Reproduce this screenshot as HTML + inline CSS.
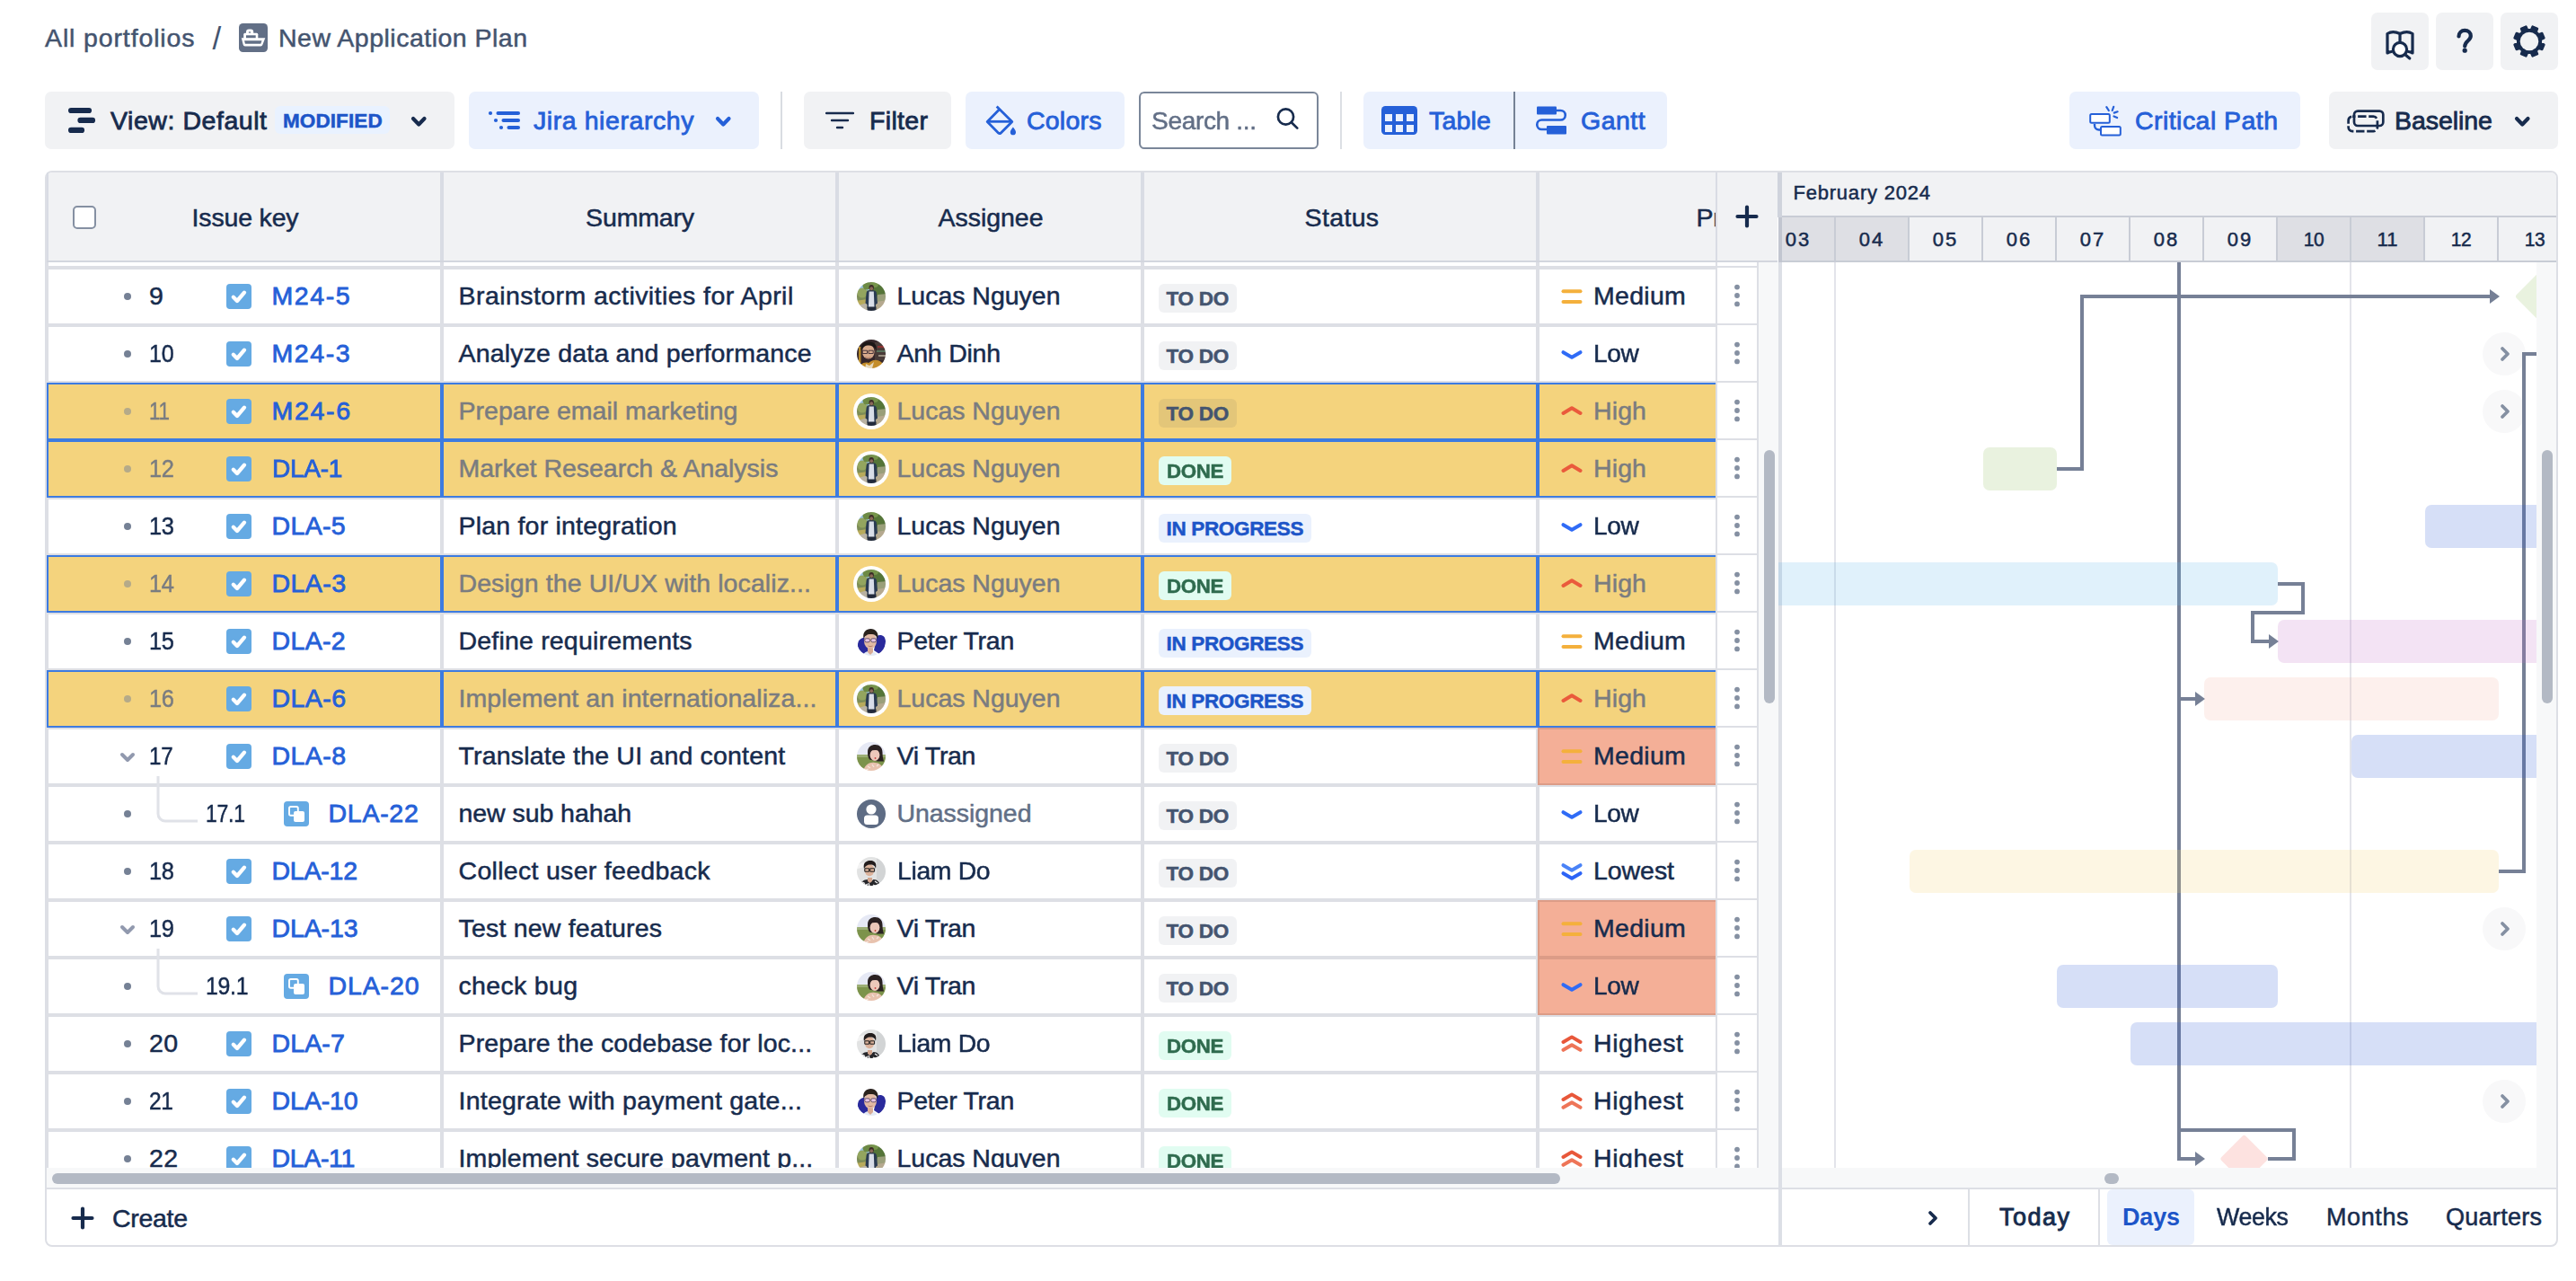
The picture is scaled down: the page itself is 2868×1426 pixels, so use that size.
<!DOCTYPE html>
<html lang="en"><head><meta charset="utf-8"><title>New Application Plan</title><style>
html,body{margin:0;padding:0;background:#fff;}
body{width:2868px;height:1426px;position:relative;overflow:hidden;font-family:"Liberation Sans", sans-serif;}
.b{position:absolute;display:block;}
.t{position:absolute;white-space:nowrap;}
</style></head><body>
<div class="t" style="left:50px;top:23.5px;height:37px;line-height:37px;font-size:28.5px;color:#44546f;-webkit-text-stroke:0.5px #44546f;letter-spacing:0.87px;">All portfolios</div>
<div class="t" style="left:236.5px;top:19.9px;height:45px;line-height:45px;font-size:35px;color:#44546f;letter-spacing:0.00px;">/</div>
<svg class="b" style="left:266px;top:26px;" width="32" height="32" viewBox="0 0 32 32"><rect width="32" height="32" rx="4.500" fill="#626f86"/><path d="M2.800 16.200H29.300L26.300 24a2.200 2.200 0 0 1-2 1.500H6.800a2.200 2.200 0 0 1-2.100-1.700z" fill="#fff"/><path d="M6.100 19.200H25.500L24.300 22.700H6.900z" fill="#626f86"/><path d="M5.200 17v-4.700a1.500 1.500 0 0 1 1.500-1.500H19.800a1.500 1.500 0 0 1 1.500 1.500V17z" fill="#fff"/><rect x="8" y="13.300" width="10.700" height="2.900" fill="#626f86"/><path d="M8 11.500V9.600a3 3 0 0 1 3-3h2.200a3 3 0 0 1 3 3v1.900z" fill="#fff"/><ellipse cx="12" cy="10" rx="1.300" ry=".800" fill="#626f86"/></svg>
<div class="t" style="left:310px;top:23.5px;height:37px;line-height:37px;font-size:28.5px;color:#44546f;-webkit-text-stroke:0.5px #44546f;letter-spacing:0.49px;">New Application Plan</div>
<div class="b" style="left:2640px;top:14px;width:64px;height:64px;background:#f1f2f4;border-radius:7px;"></div>
<div class="b" style="left:2712px;top:14px;width:64px;height:64px;background:#f1f2f4;border-radius:7px;"></div>
<div class="b" style="left:2784px;top:14px;width:64px;height:64px;background:#f1f2f4;border-radius:7px;"></div>
<svg class="b" style="left:2652px;top:30px;" width="40" height="40" viewBox="0 0 40 40"><path d="M6 7.5c4-2.4 8.5-2.4 14 0v12 M20 7.5c5.5-2.4 10-2.4 14 0V29c-1.6-.9-3-1.3-4.6-1.5 M6 7.5V29c1.600-.9 3-1.3 4.600-1.500" fill="none" stroke="#172b4d" stroke-width="3.2" stroke-linejoin="round" stroke-linecap="round"/><circle cx="20" cy="25" r="7.6" fill="#fff" stroke="#172b4d" stroke-width="3.2"/><path d="M25.800 30.800l5 4.200" stroke="#172b4d" stroke-width="3.200" stroke-linecap="round"/></svg>
<svg class="b" style="left:2728px;top:26px;" width="32" height="40" viewBox="0 0 32 40"><path d="M9.500 14.500c0-4 3-6.700 6.700-6.700s6.600 2.700 6.600 6.200c0 5.400-6.600 5.600-6.600 11.500" fill="none" stroke="#172b4d" stroke-width="4.200" stroke-linecap="round"/><circle cx="16.200" cy="30.200" r="2.600" fill="#172b4d"/></svg>
<svg class="b" style="left:2795.5px;top:25.5px;" width="40" height="40" viewBox="0 0 40 40"><path d="M23.7 3.6 L29.0 5.8 L27.6 9.5 L30.5 12.4 L34.2 11.0 L36.4 16.3 L32.8 18.0 L32.8 22.0 L36.4 23.7 L34.2 29.0 L30.5 27.6 L27.6 30.5 L29.0 34.2 L23.7 36.4 L22.0 32.8 L18.0 32.8 L16.3 36.4 L11.0 34.2 L12.4 30.5 L9.5 27.6 L5.8 29.0 L3.6 23.7 L7.2 22.0 L7.2 18.0 L3.6 16.3 L5.8 11.0 L9.5 12.4 L12.4 9.5 L11.0 5.8 L16.3 3.6 L18.0 7.2 L22.0 7.2Z" fill="#172b4d" stroke="#172b4d" stroke-width="2.500" stroke-linejoin="round"/><circle cx="20" cy="20" r="10.3" fill="#f1f2f4"/></svg>
<div class="b" style="left:50px;top:102px;width:456px;height:64px;background:#f1f2f4;border-radius:7px;"></div>
<svg class="b" style="left:76px;top:118px;" width="32" height="32" viewBox="0 0 32 32"><g stroke="#172b4d" stroke-width="6.200" stroke-linecap="round"><path d="M3.100 5H23"/><path d="M13.500 15.900H27"/><path d="M3.100 26.900H15"/></g></svg>
<div class="t" style="left:123px;top:115.5px;height:37px;line-height:37px;font-size:28.5px;color:#172b4d;-webkit-text-stroke:0.8px #172b4d;letter-spacing:0.55px;">View: Default</div>
<div class="b" style="left:306px;top:118px;width:128px;height:31px;background:#e9f2ff;border-radius:6px;"></div>
<div class="t" style="left:315px;top:119.5px;height:29px;line-height:29px;font-size:22.5px;color:#1d55c8;font-weight:700;-webkit-text-stroke:0.5px #1d55c8;letter-spacing:0.09px;">MODIFIED</div>
<svg class="b" style="left:455.75px;top:127.75px;" width="20.5" height="14.5" viewBox="0 0 20.5 14.5"><path d="M4 4l6.25 6.5l6.25 -6.5" fill="none" stroke="#172b4d" stroke-width="4.2" stroke-linecap="round" stroke-linejoin="round"/></svg>
<div class="b" style="left:522px;top:102px;width:323px;height:64px;background:#ebf1fd;border-radius:7px;"></div>
<svg class="b" style="left:543px;top:118px;" width="40" height="32" viewBox="0 0 40 32"><g stroke="#2560d8" stroke-width="4.100" stroke-linecap="round"><path d="M11.500 8H34"/><path d="M17.500 16H34"/><path d="M23.500 24H34"/></g><g fill="#2560d8"><circle cx="3" cy="8" r="2.100"/><circle cx="9" cy="16" r="2.100"/><circle cx="15" cy="24" r="2.100"/></g></svg>
<div class="t" style="left:594px;top:115.5px;height:37px;line-height:37px;font-size:28.5px;color:#2560d8;-webkit-text-stroke:0.8px #2560d8;letter-spacing:0.57px;">Jira hierarchy</div>
<svg class="b" style="left:794.75px;top:127.75px;" width="20.5" height="14.5" viewBox="0 0 20.5 14.5"><path d="M4 4l6.25 6.5l6.25 -6.5" fill="none" stroke="#2560d8" stroke-width="4.2" stroke-linecap="round" stroke-linejoin="round"/></svg>
<div class="b" style="left:869px;top:102px;width:2px;height:64px;background:#d9dce2;"></div>
<div class="b" style="left:895px;top:102px;width:164px;height:64px;background:#f1f2f4;border-radius:7px;"></div>
<svg class="b" style="left:919px;top:118px;" width="32" height="32" viewBox="0 0 32 32"><g stroke="#172b4d" stroke-width="2.400" stroke-linecap="round"><path d="M1 8H31"/><path d="M7 16H25"/><path d="M13 24H19"/></g></svg>
<div class="t" style="left:968px;top:115.5px;height:37px;line-height:37px;font-size:28.5px;color:#172b4d;-webkit-text-stroke:0.8px #172b4d;letter-spacing:0.33px;">Filter</div>
<div class="b" style="left:1075px;top:102px;width:177px;height:64px;background:#ebf1fd;border-radius:7px;"></div>
<svg class="b" style="left:1097px;top:116px;" width="38" height="38" viewBox="0 0 38 38"><path d="M12.700 2.400L29.800 19.400 17.300 31.900a2 2 0 0 1-2.800 0L2.200 19.400 15.900 5.600" fill="none" stroke="#2560d8" stroke-width="2.800" stroke-linejoin="round" stroke-linecap="butt"/><path d="M2.500 19.300H29.500" stroke="#2560d8" stroke-width="2.800"/><path d="M30.900 25.500c2 2.800 3.100 4.300 3.100 5.700a3.100 3.100 0 0 1-6.200 0c0-1.400 1.100-2.900 3.100-5.700z" fill="#2560d8"/></svg>
<div class="t" style="left:1143px;top:115.5px;height:37px;line-height:37px;font-size:28.5px;color:#2560d8;-webkit-text-stroke:0.8px #2560d8;letter-spacing:0.21px;">Colors</div>
<div class="b" style="left:1268px;top:102px;width:200px;height:64px;background:#fff;border-radius:6px;border:2px solid #7a8699;box-sizing:border-box;"></div>
<div class="t" style="left:1282px;top:115.5px;height:37px;line-height:37px;font-size:28.5px;color:#626f86;-webkit-text-stroke:0.5px #626f86;letter-spacing:-0.35px;transform:scaleX(0.985);transform-origin:left center;">Search ...</div>
<svg class="b" style="left:1416px;top:116px;" width="36" height="36" viewBox="0 0 36 36"><circle cx="15.500" cy="14" r="8.600" fill="none" stroke="#172b4d" stroke-width="2.700"/><path d="M21.800 20.300L28.300 26.600" stroke="#172b4d" stroke-width="2.700" stroke-linecap="round"/></svg>
<div class="b" style="left:1492px;top:102px;width:2px;height:64px;background:#dcdfe4;"></div>
<div class="b" style="left:1518px;top:102px;width:338px;height:64px;background:#ebf1fd;border-radius:7px;"></div>
<div class="b" style="left:1685px;top:102px;width:2px;height:64px;background:#758195;"></div>
<svg class="b" style="left:1538px;top:118px;" width="40" height="32" viewBox="0 0 40 32"><rect width="40" height="32" rx="4.500" fill="#2560d8"/><rect x="4" y="9" width="8" height="8" fill="#ebf1fd"/><rect x="4" y="21" width="8" height="8" fill="#ebf1fd"/><rect x="16" y="9" width="8" height="8" fill="#ebf1fd"/><rect x="16" y="21" width="8" height="8" fill="#ebf1fd"/><rect x="28" y="9" width="8" height="8" fill="#ebf1fd"/><rect x="28" y="21" width="8" height="8" fill="#ebf1fd"/></svg>
<div class="t" style="left:1591px;top:115.5px;height:37px;line-height:37px;font-size:28.5px;color:#2560d8;-webkit-text-stroke:0.8px #2560d8;letter-spacing:0.21px;">Table</div>
<svg class="b" style="left:1708px;top:116px;" width="40" height="36" viewBox="0 0 40 36"><rect x="3" y="2.500" width="22" height="9" rx="1" fill="#2560d8"/><rect x="14" y="24" width="22" height="9.500" rx="1" fill="#2560d8"/><path d="M25 7h4.500a5 5 0 0 1 0 10.500H8.500a5 5 0 0 0 0 10.500H14" fill="none" stroke="#2560d8" stroke-width="2.600"/></svg>
<div class="t" style="left:1760px;top:115.5px;height:37px;line-height:37px;font-size:28.5px;color:#2560d8;-webkit-text-stroke:0.8px #2560d8;letter-spacing:0.50px;">Gantt</div>
<div class="b" style="left:2304px;top:102px;width:257px;height:64px;background:#ebf1fd;border-radius:7px;"></div>
<svg class="b" style="left:2324px;top:114px;" width="42" height="40" viewBox="0 0 42 40"><g fill="#fff" stroke="#2560d8" stroke-width="2" stroke-linejoin="round"><path d="M8 24v1.500a5 5 0 0 0 5 5h2" fill="none" stroke-width="2.400"/><rect x="3.200" y="13" width="21.600" height="9.800" rx="1.500"/><rect x="15" y="27" width="21.800" height="9.600" rx="1.500"/></g><g stroke="#2560d8" stroke-width="2.200" stroke-linecap="round"><path d="M21.300 5.200l2.500 3.800"/><path d="M29.200 4.800l-1.500 4.200"/><path d="M33.600 10.300l-3.800 1.300"/><path d="M33.100 17l-3.600-1.600"/></g></svg>
<div class="t" style="left:2377px;top:115.5px;height:37px;line-height:37px;font-size:28.5px;color:#2560d8;-webkit-text-stroke:0.8px #2560d8;letter-spacing:0.45px;">Critical Path</div>
<div class="b" style="left:2593px;top:102px;width:255px;height:64px;background:#f1f2f4;border-radius:7px;"></div>
<svg class="b" style="left:2611px;top:118px;" width="46" height="32" viewBox="0 0 46 32"><rect x="10" y="5.600" width="32.300" height="16.400" rx="4" fill="none" stroke="#172b4d" stroke-width="2.700"/><rect x="3.600" y="11.700" width="32.300" height="16.400" rx="4.500" fill="none" stroke="#172b4d" stroke-width="2.700" stroke-dasharray="9.400 2.700" stroke-dashoffset="-6"/></svg>
<div class="t" style="left:2666px;top:115.5px;height:37px;line-height:37px;font-size:28.5px;color:#172b4d;-webkit-text-stroke:0.8px #172b4d;letter-spacing:-0.05px;">Baseline</div>
<svg class="b" style="left:2797.75px;top:127.75px;" width="20.5" height="14.5" viewBox="0 0 20.5 14.5"><path d="M4 4l6.25 6.5l6.25 -6.5" fill="none" stroke="#172b4d" stroke-width="4.2" stroke-linecap="round" stroke-linejoin="round"/></svg>
<div class="b" style="left:50px;top:190px;width:2798px;height:1198px;background:#fff;border:2px solid #dddfe5;border-radius:8px;box-sizing:border-box;"></div>
<div class="b" style="left:52px;top:192px;width:1927px;height:98px;background:#f1f2f4;border-top-left-radius:6px;"></div>
<div class="b" style="left:52px;top:290px;width:1927px;height:2px;background:#d3d6de;"></div>
<div class="b" style="left:490px;top:192px;width:4px;height:98px;background:#d9dce4;"></div>
<div class="b" style="left:930px;top:192px;width:4px;height:98px;background:#d9dce4;"></div>
<div class="b" style="left:1270px;top:192px;width:4px;height:98px;background:#d9dce4;"></div>
<div class="b" style="left:1710px;top:192px;width:4px;height:98px;background:#d9dce4;"></div>
<div class="b" style="left:1910px;top:192px;width:2px;height:98px;background:#d9dce4;"></div>
<div class="b" style="left:52px;top:192px;width:2px;height:98px;background:#d9dce4;"></div>
<div class="b" style="left:81px;top:229px;width:26px;height:26px;background:#fff;border:2px solid #8590a2;border-radius:5px;box-sizing:border-box;"></div>
<div class="t" style="left:273px;top:223.5px;height:37px;line-height:37px;font-size:28.5px;color:#172b4d;-webkit-text-stroke:0.5px #172b4d;letter-spacing:-0.17px;transform:translateX(-50%);transform-origin:center center;">Issue key</div>
<div class="t" style="left:712.5px;top:223.5px;height:37px;line-height:37px;font-size:28.5px;color:#172b4d;-webkit-text-stroke:0.5px #172b4d;letter-spacing:-0.16px;transform:translateX(-50%);transform-origin:center center;">Summary</div>
<div class="t" style="left:1103px;top:223.5px;height:37px;line-height:37px;font-size:28.5px;color:#172b4d;-webkit-text-stroke:0.5px #172b4d;letter-spacing:-0.04px;transform:translateX(-50%);transform-origin:center center;">Assignee</div>
<div class="t" style="left:1494px;top:223.5px;height:37px;line-height:37px;font-size:28.5px;color:#172b4d;-webkit-text-stroke:0.5px #172b4d;letter-spacing:0.34px;transform:translateX(-50%);transform-origin:center center;">Status</div>
<div class="b" style="left:1880px;top:192px;width:30px;height:98px;overflow:hidden;"><div class="t" style="left:8.5px;top:31.5px;height:37px;line-height:37px;font-size:28.5px;color:#172b4d;-webkit-text-stroke:0.5px #172b4d;letter-spacing:-0.35px;">Priority</div></div>
<svg class="b" style="left:1931px;top:227px;" width="28" height="28" viewBox="0 0 28 28"><path d="M14 3.500V24.500M3.500 14H24.500" stroke="#172b4d" stroke-width="4.200" stroke-linecap="round"/></svg>
<div class="b" style="left:52px;top:292px;width:1858px;height:1008px;overflow:hidden;"><div class="b" style="left:0px;top:0px;width:2px;height:1008px;background:#dddfe5;"></div><div class="b" style="left:438px;top:0px;width:4px;height:1008px;background:#dddfe5;"></div><div class="b" style="left:878px;top:0px;width:4px;height:1008px;background:#dddfe5;"></div><div class="b" style="left:1218px;top:0px;width:4px;height:1008px;background:#dddfe5;"></div><div class="b" style="left:1658px;top:0px;width:4px;height:1008px;background:#dddfe5;"></div><div class="b" style="left:2px;top:4px;width:1856px;height:4px;background:#dddfe5;"></div><div class="b" style="left:2px;top:68px;width:1856px;height:4px;background:#dddfe5;"></div><div class="b" style="left:2px;top:132px;width:1856px;height:4px;background:#dddfe5;"></div><div class="b" style="left:2px;top:196px;width:1856px;height:4px;background:#dddfe5;"></div><div class="b" style="left:2px;top:260px;width:1856px;height:4px;background:#dddfe5;"></div><div class="b" style="left:2px;top:324px;width:1856px;height:4px;background:#dddfe5;"></div><div class="b" style="left:2px;top:388px;width:1856px;height:4px;background:#dddfe5;"></div><div class="b" style="left:2px;top:452px;width:1856px;height:4px;background:#dddfe5;"></div><div class="b" style="left:2px;top:516px;width:1856px;height:4px;background:#dddfe5;"></div><div class="b" style="left:2px;top:580px;width:1856px;height:4px;background:#dddfe5;"></div><div class="b" style="left:2px;top:644px;width:1856px;height:4px;background:#dddfe5;"></div><div class="b" style="left:2px;top:708px;width:1856px;height:4px;background:#dddfe5;"></div><div class="b" style="left:2px;top:772px;width:1856px;height:4px;background:#dddfe5;"></div><div class="b" style="left:2px;top:836px;width:1856px;height:4px;background:#dddfe5;"></div><div class="b" style="left:2px;top:900px;width:1856px;height:4px;background:#dddfe5;"></div><div class="b" style="left:2px;top:964px;width:1856px;height:4px;background:#dddfe5;"></div><div class="b" style="left:2px;top:1028px;width:1856px;height:4px;background:#dddfe5;"></div><div class="b" style="left:86px;top:34px;width:8px;height:8px;background:#758195;border-radius:50%;"></div><div class="t" style="left:114px;top:19.0px;height:37px;line-height:37px;font-size:28.5px;color:#172b4d;-webkit-text-stroke:0.5px #172b4d;letter-spacing:0.14px;">9</div><svg class="b" style="left:200px;top:24px;" width="28" height="28" viewBox="0 0 28 28"><rect width="28" height="28" rx="4" fill="#65aae3"/><path d="M7.800 14.800l4.200 4.200 8-9.300" fill="none" stroke="#fff" stroke-width="4.300" stroke-linecap="round" stroke-linejoin="round"/></svg><div class="t" style="left:250.5px;top:19.0px;height:37px;line-height:37px;font-size:28.5px;color:#2560d8;-webkit-text-stroke:0.8px #2560d8;letter-spacing:1.60px;">M24-5</div><div class="t" style="left:458.5px;top:19.0px;height:37px;line-height:37px;font-size:28.5px;color:#172b4d;-webkit-text-stroke:0.5px #172b4d;letter-spacing:0.44px;">Brainstorm activities for April</div><svg class="b" style="left:902px;top:22px;" width="32" height="32" viewBox="0 0 32 32"><defs><clipPath id="c1"><circle cx="16" cy="16" r="16"/></clipPath><filter id="fc1" x="-10%" y="-10%" width="120%" height="120%"><feGaussianBlur stdDeviation="0.55"/></filter></defs><g clip-path="url(#c1)"><g filter="url(#fc1)"><rect x="-2" y="-2" width="36" height="36" fill="#7c8c56"/><path d="M-2 -2H14V9L-2 12z" fill="#9cc4e6"/><circle cx="6" cy="12" r="5.500" fill="#93a55e"/><circle cx="11" cy="4" r="4.500" fill="#6d8a44"/><circle cx="25" cy="8" r="8" fill="#557538"/><circle cx="20" cy="2" r="4" fill="#76944c"/><circle cx="30" cy="15" r="4" fill="#55733a"/><path d="M-2 21L12 19V34H-2z" fill="#b8ab5c"/><path d="M-2 27L12 23V34H-2z" fill="#b9b2a2"/><path d="M20 20L34 17V34H20z" fill="#b5a98f"/><path d="M23 14L34 13V20L22 22z" fill="#9a9f7a"/><path d="M10.500 12.500c0-2.500 2-3.500 5.700-3.500s5.800 1 5.800 3.500l1 11-2 1.500V29H11.500V25l-2-1.500z" fill="#2b3b52"/><path d="M13.600 10.500h5.200l.700 17.500h-6.600z" fill="#d8dde8"/><rect x="11.500" y="27.500" width="10" height="6" fill="#232c3a"/><ellipse cx="16.200" cy="6.200" rx="2.700" ry="3.100" fill="#3b2c27"/><ellipse cx="16.200" cy="7.200" rx="1.900" ry="2" fill="#8a6a58"/></g></g></svg><div class="t" style="left:946.5px;top:19.0px;height:37px;line-height:37px;font-size:28.5px;color:#172b4d;-webkit-text-stroke:0.5px #172b4d;letter-spacing:-0.02px;">Lucas Nguyen</div><div class="b" style="left:1238px;top:24px;width:87px;height:32px;background:#f1f2f4;border-radius:6px;"></div><div class="t" style="left:1246.5px;top:26.0px;height:29px;line-height:29px;font-size:22.5px;color:#44546f;font-weight:700;-webkit-text-stroke:0.5px #44546f;letter-spacing:-0.29px;">TO DO</div><svg class="b" style="left:1686px;top:26px;" width="24" height="24" viewBox="0 0 24 24"><g stroke="#f4b03c" stroke-width="4" stroke-linecap="round"><path d="M2.500 6.200H21.500"/><path d="M2.500 17.900H21.500"/></g></svg><div class="t" style="left:1722px;top:19.0px;height:37px;line-height:37px;font-size:28.5px;color:#172b4d;-webkit-text-stroke:0.5px #172b4d;letter-spacing:0.28px;">Medium</div><div class="b" style="left:86px;top:98px;width:8px;height:8px;background:#758195;border-radius:50%;"></div><div class="t" style="left:114px;top:83.0px;height:37px;line-height:37px;font-size:28.5px;color:#172b4d;-webkit-text-stroke:0.5px #172b4d;letter-spacing:-0.35px;transform:scaleX(0.880);transform-origin:left center;">10</div><svg class="b" style="left:200px;top:88px;" width="28" height="28" viewBox="0 0 28 28"><rect width="28" height="28" rx="4" fill="#65aae3"/><path d="M7.800 14.800l4.200 4.200 8-9.300" fill="none" stroke="#fff" stroke-width="4.300" stroke-linecap="round" stroke-linejoin="round"/></svg><div class="t" style="left:250.5px;top:83.0px;height:37px;line-height:37px;font-size:28.5px;color:#2560d8;-webkit-text-stroke:0.8px #2560d8;letter-spacing:1.60px;">M24-3</div><div class="t" style="left:458.5px;top:83.0px;height:37px;line-height:37px;font-size:28.5px;color:#172b4d;-webkit-text-stroke:0.5px #172b4d;letter-spacing:0.18px;">Analyze data and performance</div><svg class="b" style="left:902px;top:86px;" width="32" height="32" viewBox="0 0 32 32"><defs><clipPath id="c2"><circle cx="16" cy="16" r="16"/></clipPath><filter id="fc2" x="-10%" y="-10%" width="120%" height="120%"><feGaussianBlur stdDeviation="0.55"/></filter></defs><g clip-path="url(#c2)"><g filter="url(#fc2)"><rect x="-2" y="-2" width="36" height="36" fill="#35272a"/><rect x="20" y="3" width="14" height="20" fill="#4a3b38"/><rect x="23" y="7" width="9" height="2.200" fill="#8d3030"/><rect x="22" y="12" width="10" height="2" fill="#58705a"/><rect x="24" y="17" width="8" height="2" fill="#9a8f80"/><rect x="2" y="8" width="2.500" height="18" fill="#b5882a"/><ellipse cx="12.800" cy="13.500" rx="6.800" ry="8" fill="#d7a98c"/><path d="M4.500 12c-.500-7 4-10 9.500-9.500 5.500 0 9 3.500 7.500 10.500-1-4-3-6-8-6.500-4.500 0-7 2-9 5.500z" fill="#1f1718"/><path d="M2 34c1-7 6-9.500 11-8l3-2c6-3 12 0 15 6v4z" fill="#c48d2c"/><path d="M10 27l4 2 5-4-2.500 9H9z" fill="#e6d9bd"/><path d="M6.300 12.200h5.200v3.300H6.300zM13 12.200h5.200v3.300H13z" fill="none" stroke="#3b2b33" stroke-width=".900"/><path d="M9.500 19.500c2 1.200 4 1.200 6 0" fill="none" stroke="#a8705c" stroke-width=".900"/></g></g></svg><div class="t" style="left:946.5px;top:83.0px;height:37px;line-height:37px;font-size:28.5px;color:#172b4d;-webkit-text-stroke:0.5px #172b4d;letter-spacing:-0.25px;">Anh Dinh</div><div class="b" style="left:1238px;top:88px;width:87px;height:32px;background:#f1f2f4;border-radius:6px;"></div><div class="t" style="left:1246.5px;top:90.0px;height:29px;line-height:29px;font-size:22.5px;color:#44546f;font-weight:700;-webkit-text-stroke:0.5px #44546f;letter-spacing:-0.29px;">TO DO</div><svg class="b" style="left:1686px;top:90px;" width="24" height="24" viewBox="0 0 24 24"><path d="M2.5 10.2 L12 15.8 L21.5 10.2" fill="none" stroke="#2f6bf6" stroke-width="4" stroke-linecap="round" stroke-linejoin="round"/></svg><div class="t" style="left:1722px;top:83.0px;height:37px;line-height:37px;font-size:28.5px;color:#172b4d;-webkit-text-stroke:0.5px #172b4d;letter-spacing:-0.35px;transform:scaleX(0.985);transform-origin:left center;">Low</div><div class="b" style="left:0px;top:134px;width:440px;height:64px;background:#f4d37d;border:2px solid #3d7be0;box-sizing:border-box;"></div><div class="b" style="left:440px;top:134px;width:440px;height:64px;background:#f4d37d;border:2px solid #3d7be0;box-sizing:border-box;"></div><div class="b" style="left:880px;top:134px;width:340px;height:64px;background:#f4d37d;border:2px solid #3d7be0;box-sizing:border-box;"></div><div class="b" style="left:1220px;top:134px;width:440px;height:64px;background:#f4d37d;border:2px solid #3d7be0;box-sizing:border-box;"></div><div class="b" style="left:1660px;top:134px;width:200px;height:64px;background:#f4d37d;border:2px solid #3d7be0;box-sizing:border-box;"></div><div class="b" style="left:86px;top:162px;width:8px;height:8px;background:#758195;border-radius:50%;opacity:.5;"></div><div class="t" style="left:114px;top:147.0px;height:37px;line-height:37px;font-size:28.5px;color:#7a7c80;-webkit-text-stroke:0.5px #7a7c80;letter-spacing:-0.35px;transform:scaleX(0.786);transform-origin:left center;">11</div><svg class="b" style="left:200px;top:152px;" width="28" height="28" viewBox="0 0 28 28"><rect width="28" height="28" rx="4" fill="#65aae3"/><path d="M7.800 14.800l4.200 4.200 8-9.300" fill="none" stroke="#fff" stroke-width="4.300" stroke-linecap="round" stroke-linejoin="round"/></svg><div class="t" style="left:250.5px;top:147.0px;height:37px;line-height:37px;font-size:28.5px;color:#2560d8;-webkit-text-stroke:0.8px #2560d8;letter-spacing:1.68px;">M24-6</div><div class="t" style="left:458.5px;top:147.0px;height:37px;line-height:37px;font-size:28.5px;color:#7a7c80;-webkit-text-stroke:0.5px #7a7c80;letter-spacing:0.02px;">Prepare email marketing</div><div class="b" style="left:898px;top:146px;width:40px;height:40px;background:#fff;border-radius:50%;"></div><svg class="b" style="left:902px;top:150px;" width="32" height="32" viewBox="0 0 32 32"><defs><clipPath id="c3"><circle cx="16" cy="16" r="16"/></clipPath><filter id="fc3" x="-10%" y="-10%" width="120%" height="120%"><feGaussianBlur stdDeviation="0.55"/></filter></defs><g clip-path="url(#c3)"><g filter="url(#fc3)"><rect x="-2" y="-2" width="36" height="36" fill="#7c8c56"/><path d="M-2 -2H14V9L-2 12z" fill="#9cc4e6"/><circle cx="6" cy="12" r="5.500" fill="#93a55e"/><circle cx="11" cy="4" r="4.500" fill="#6d8a44"/><circle cx="25" cy="8" r="8" fill="#557538"/><circle cx="20" cy="2" r="4" fill="#76944c"/><circle cx="30" cy="15" r="4" fill="#55733a"/><path d="M-2 21L12 19V34H-2z" fill="#b8ab5c"/><path d="M-2 27L12 23V34H-2z" fill="#b9b2a2"/><path d="M20 20L34 17V34H20z" fill="#b5a98f"/><path d="M23 14L34 13V20L22 22z" fill="#9a9f7a"/><path d="M10.500 12.500c0-2.500 2-3.500 5.700-3.500s5.800 1 5.800 3.500l1 11-2 1.500V29H11.500V25l-2-1.500z" fill="#2b3b52"/><path d="M13.600 10.500h5.200l.700 17.500h-6.600z" fill="#d8dde8"/><rect x="11.500" y="27.500" width="10" height="6" fill="#232c3a"/><ellipse cx="16.200" cy="6.200" rx="2.700" ry="3.100" fill="#3b2c27"/><ellipse cx="16.200" cy="7.200" rx="1.900" ry="2" fill="#8a6a58"/></g></g></svg><div class="t" style="left:946.5px;top:147.0px;height:37px;line-height:37px;font-size:28.5px;color:#7a7c80;-webkit-text-stroke:0.5px #7a7c80;letter-spacing:-0.02px;">Lucas Nguyen</div><div class="b" style="left:1238px;top:152px;width:87px;height:32px;background:rgba(9,30,66,.07);border-radius:6px;"></div><div class="t" style="left:1246.5px;top:154.0px;height:29px;line-height:29px;font-size:22.5px;color:#44546f;font-weight:700;-webkit-text-stroke:0.5px #44546f;letter-spacing:-0.29px;">TO DO</div><svg class="b" style="left:1686px;top:154px;" width="24" height="24" viewBox="0 0 24 24"><path d="M2.5 14 L12 8.2 L21.5 14" fill="none" stroke="#ea5a3c" stroke-width="4" stroke-linecap="round" stroke-linejoin="round"/></svg><div class="t" style="left:1722px;top:147.0px;height:37px;line-height:37px;font-size:28.5px;color:#7a7c80;-webkit-text-stroke:0.5px #7a7c80;letter-spacing:0.12px;">High</div><div class="b" style="left:0px;top:198px;width:440px;height:64px;background:#f4d37d;border:2px solid #3d7be0;box-sizing:border-box;"></div><div class="b" style="left:440px;top:198px;width:440px;height:64px;background:#f4d37d;border:2px solid #3d7be0;box-sizing:border-box;"></div><div class="b" style="left:880px;top:198px;width:340px;height:64px;background:#f4d37d;border:2px solid #3d7be0;box-sizing:border-box;"></div><div class="b" style="left:1220px;top:198px;width:440px;height:64px;background:#f4d37d;border:2px solid #3d7be0;box-sizing:border-box;"></div><div class="b" style="left:1660px;top:198px;width:200px;height:64px;background:#f4d37d;border:2px solid #3d7be0;box-sizing:border-box;"></div><div class="b" style="left:86px;top:226px;width:8px;height:8px;background:#758195;border-radius:50%;opacity:.5;"></div><div class="t" style="left:114px;top:211.0px;height:37px;line-height:37px;font-size:28.5px;color:#7a7c80;-webkit-text-stroke:0.5px #7a7c80;letter-spacing:-0.35px;transform:scaleX(0.893);transform-origin:left center;">12</div><svg class="b" style="left:200px;top:216px;" width="28" height="28" viewBox="0 0 28 28"><rect width="28" height="28" rx="4" fill="#65aae3"/><path d="M7.800 14.800l4.200 4.200 8-9.300" fill="none" stroke="#fff" stroke-width="4.300" stroke-linecap="round" stroke-linejoin="round"/></svg><div class="t" style="left:250.5px;top:211.0px;height:37px;line-height:37px;font-size:28.5px;color:#2560d8;-webkit-text-stroke:0.8px #2560d8;letter-spacing:-0.35px;transform:scaleX(0.989);transform-origin:left center;">DLA-1</div><div class="t" style="left:458.5px;top:211.0px;height:37px;line-height:37px;font-size:28.5px;color:#7a7c80;-webkit-text-stroke:0.5px #7a7c80;letter-spacing:-0.02px;">Market Research &amp; Analysis</div><div class="b" style="left:898px;top:210px;width:40px;height:40px;background:#fff;border-radius:50%;"></div><svg class="b" style="left:902px;top:214px;" width="32" height="32" viewBox="0 0 32 32"><defs><clipPath id="c4"><circle cx="16" cy="16" r="16"/></clipPath><filter id="fc4" x="-10%" y="-10%" width="120%" height="120%"><feGaussianBlur stdDeviation="0.55"/></filter></defs><g clip-path="url(#c4)"><g filter="url(#fc4)"><rect x="-2" y="-2" width="36" height="36" fill="#7c8c56"/><path d="M-2 -2H14V9L-2 12z" fill="#9cc4e6"/><circle cx="6" cy="12" r="5.500" fill="#93a55e"/><circle cx="11" cy="4" r="4.500" fill="#6d8a44"/><circle cx="25" cy="8" r="8" fill="#557538"/><circle cx="20" cy="2" r="4" fill="#76944c"/><circle cx="30" cy="15" r="4" fill="#55733a"/><path d="M-2 21L12 19V34H-2z" fill="#b8ab5c"/><path d="M-2 27L12 23V34H-2z" fill="#b9b2a2"/><path d="M20 20L34 17V34H20z" fill="#b5a98f"/><path d="M23 14L34 13V20L22 22z" fill="#9a9f7a"/><path d="M10.500 12.500c0-2.500 2-3.500 5.700-3.500s5.800 1 5.800 3.500l1 11-2 1.500V29H11.500V25l-2-1.500z" fill="#2b3b52"/><path d="M13.600 10.500h5.200l.700 17.500h-6.600z" fill="#d8dde8"/><rect x="11.500" y="27.500" width="10" height="6" fill="#232c3a"/><ellipse cx="16.200" cy="6.200" rx="2.700" ry="3.100" fill="#3b2c27"/><ellipse cx="16.200" cy="7.200" rx="1.900" ry="2" fill="#8a6a58"/></g></g></svg><div class="t" style="left:946.5px;top:211.0px;height:37px;line-height:37px;font-size:28.5px;color:#7a7c80;-webkit-text-stroke:0.5px #7a7c80;letter-spacing:-0.02px;">Lucas Nguyen</div><div class="b" style="left:1238px;top:216px;width:81px;height:32px;background:#e1fcf1;border-radius:6px;"></div><div class="t" style="left:1246.5px;top:218.0px;height:29px;line-height:29px;font-size:22.5px;color:#2f6b4e;font-weight:700;-webkit-text-stroke:0.5px #2f6b4e;letter-spacing:-0.35px;transform:scaleX(0.991);transform-origin:left center;">DONE</div><svg class="b" style="left:1686px;top:218px;" width="24" height="24" viewBox="0 0 24 24"><path d="M2.5 14 L12 8.2 L21.5 14" fill="none" stroke="#ea5a3c" stroke-width="4" stroke-linecap="round" stroke-linejoin="round"/></svg><div class="t" style="left:1722px;top:211.0px;height:37px;line-height:37px;font-size:28.5px;color:#7a7c80;-webkit-text-stroke:0.5px #7a7c80;letter-spacing:0.12px;">High</div><div class="b" style="left:86px;top:290px;width:8px;height:8px;background:#758195;border-radius:50%;"></div><div class="t" style="left:114px;top:275.0px;height:37px;line-height:37px;font-size:28.5px;color:#172b4d;-webkit-text-stroke:0.5px #172b4d;letter-spacing:-0.35px;transform:scaleX(0.893);transform-origin:left center;">13</div><svg class="b" style="left:200px;top:280px;" width="28" height="28" viewBox="0 0 28 28"><rect width="28" height="28" rx="4" fill="#65aae3"/><path d="M7.800 14.800l4.200 4.200 8-9.300" fill="none" stroke="#fff" stroke-width="4.300" stroke-linecap="round" stroke-linejoin="round"/></svg><div class="t" style="left:250.5px;top:275.0px;height:37px;line-height:37px;font-size:28.5px;color:#2560d8;-webkit-text-stroke:0.8px #2560d8;letter-spacing:0.35px;">DLA-5</div><div class="t" style="left:458.5px;top:275.0px;height:37px;line-height:37px;font-size:28.5px;color:#172b4d;-webkit-text-stroke:0.5px #172b4d;letter-spacing:0.20px;">Plan for integration</div><svg class="b" style="left:902px;top:278px;" width="32" height="32" viewBox="0 0 32 32"><defs><clipPath id="c5"><circle cx="16" cy="16" r="16"/></clipPath><filter id="fc5" x="-10%" y="-10%" width="120%" height="120%"><feGaussianBlur stdDeviation="0.55"/></filter></defs><g clip-path="url(#c5)"><g filter="url(#fc5)"><rect x="-2" y="-2" width="36" height="36" fill="#7c8c56"/><path d="M-2 -2H14V9L-2 12z" fill="#9cc4e6"/><circle cx="6" cy="12" r="5.500" fill="#93a55e"/><circle cx="11" cy="4" r="4.500" fill="#6d8a44"/><circle cx="25" cy="8" r="8" fill="#557538"/><circle cx="20" cy="2" r="4" fill="#76944c"/><circle cx="30" cy="15" r="4" fill="#55733a"/><path d="M-2 21L12 19V34H-2z" fill="#b8ab5c"/><path d="M-2 27L12 23V34H-2z" fill="#b9b2a2"/><path d="M20 20L34 17V34H20z" fill="#b5a98f"/><path d="M23 14L34 13V20L22 22z" fill="#9a9f7a"/><path d="M10.500 12.500c0-2.500 2-3.500 5.700-3.500s5.800 1 5.800 3.500l1 11-2 1.500V29H11.500V25l-2-1.500z" fill="#2b3b52"/><path d="M13.600 10.500h5.200l.700 17.500h-6.600z" fill="#d8dde8"/><rect x="11.500" y="27.500" width="10" height="6" fill="#232c3a"/><ellipse cx="16.200" cy="6.200" rx="2.700" ry="3.100" fill="#3b2c27"/><ellipse cx="16.200" cy="7.200" rx="1.900" ry="2" fill="#8a6a58"/></g></g></svg><div class="t" style="left:946.5px;top:275.0px;height:37px;line-height:37px;font-size:28.5px;color:#172b4d;-webkit-text-stroke:0.5px #172b4d;letter-spacing:-0.02px;">Lucas Nguyen</div><div class="b" style="left:1238px;top:280px;width:170px;height:32px;background:#eaf1fd;border-radius:6px;"></div><div class="t" style="left:1246.5px;top:282.0px;height:29px;line-height:29px;font-size:22.5px;color:#1d55c8;font-weight:700;-webkit-text-stroke:0.5px #1d55c8;letter-spacing:-0.33px;">IN PROGRESS</div><svg class="b" style="left:1686px;top:282px;" width="24" height="24" viewBox="0 0 24 24"><path d="M2.5 10.2 L12 15.8 L21.5 10.2" fill="none" stroke="#2f6bf6" stroke-width="4" stroke-linecap="round" stroke-linejoin="round"/></svg><div class="t" style="left:1722px;top:275.0px;height:37px;line-height:37px;font-size:28.5px;color:#172b4d;-webkit-text-stroke:0.5px #172b4d;letter-spacing:-0.35px;transform:scaleX(0.985);transform-origin:left center;">Low</div><div class="b" style="left:0px;top:326px;width:440px;height:64px;background:#f4d37d;border:2px solid #3d7be0;box-sizing:border-box;"></div><div class="b" style="left:440px;top:326px;width:440px;height:64px;background:#f4d37d;border:2px solid #3d7be0;box-sizing:border-box;"></div><div class="b" style="left:880px;top:326px;width:340px;height:64px;background:#f4d37d;border:2px solid #3d7be0;box-sizing:border-box;"></div><div class="b" style="left:1220px;top:326px;width:440px;height:64px;background:#f4d37d;border:2px solid #3d7be0;box-sizing:border-box;"></div><div class="b" style="left:1660px;top:326px;width:200px;height:64px;background:#f4d37d;border:2px solid #3d7be0;box-sizing:border-box;"></div><div class="b" style="left:86px;top:354px;width:8px;height:8px;background:#758195;border-radius:50%;opacity:.5;"></div><div class="t" style="left:114px;top:339.0px;height:37px;line-height:37px;font-size:28.5px;color:#7a7c80;-webkit-text-stroke:0.5px #7a7c80;letter-spacing:-0.35px;transform:scaleX(0.893);transform-origin:left center;">14</div><svg class="b" style="left:200px;top:344px;" width="28" height="28" viewBox="0 0 28 28"><rect width="28" height="28" rx="4" fill="#65aae3"/><path d="M7.800 14.800l4.200 4.200 8-9.300" fill="none" stroke="#fff" stroke-width="4.300" stroke-linecap="round" stroke-linejoin="round"/></svg><div class="t" style="left:250.5px;top:339.0px;height:37px;line-height:37px;font-size:28.5px;color:#2560d8;-webkit-text-stroke:0.8px #2560d8;letter-spacing:0.43px;">DLA-3</div><div class="t" style="left:458.5px;top:339.0px;height:37px;line-height:37px;font-size:28.5px;color:#7a7c80;-webkit-text-stroke:0.5px #7a7c80;letter-spacing:0.09px;">Design the UI/UX with localiz...</div><div class="b" style="left:898px;top:338px;width:40px;height:40px;background:#fff;border-radius:50%;"></div><svg class="b" style="left:902px;top:342px;" width="32" height="32" viewBox="0 0 32 32"><defs><clipPath id="c6"><circle cx="16" cy="16" r="16"/></clipPath><filter id="fc6" x="-10%" y="-10%" width="120%" height="120%"><feGaussianBlur stdDeviation="0.55"/></filter></defs><g clip-path="url(#c6)"><g filter="url(#fc6)"><rect x="-2" y="-2" width="36" height="36" fill="#7c8c56"/><path d="M-2 -2H14V9L-2 12z" fill="#9cc4e6"/><circle cx="6" cy="12" r="5.500" fill="#93a55e"/><circle cx="11" cy="4" r="4.500" fill="#6d8a44"/><circle cx="25" cy="8" r="8" fill="#557538"/><circle cx="20" cy="2" r="4" fill="#76944c"/><circle cx="30" cy="15" r="4" fill="#55733a"/><path d="M-2 21L12 19V34H-2z" fill="#b8ab5c"/><path d="M-2 27L12 23V34H-2z" fill="#b9b2a2"/><path d="M20 20L34 17V34H20z" fill="#b5a98f"/><path d="M23 14L34 13V20L22 22z" fill="#9a9f7a"/><path d="M10.500 12.500c0-2.500 2-3.500 5.700-3.500s5.800 1 5.800 3.500l1 11-2 1.500V29H11.500V25l-2-1.500z" fill="#2b3b52"/><path d="M13.600 10.500h5.200l.700 17.500h-6.600z" fill="#d8dde8"/><rect x="11.500" y="27.500" width="10" height="6" fill="#232c3a"/><ellipse cx="16.200" cy="6.200" rx="2.700" ry="3.100" fill="#3b2c27"/><ellipse cx="16.200" cy="7.200" rx="1.900" ry="2" fill="#8a6a58"/></g></g></svg><div class="t" style="left:946.5px;top:339.0px;height:37px;line-height:37px;font-size:28.5px;color:#7a7c80;-webkit-text-stroke:0.5px #7a7c80;letter-spacing:-0.02px;">Lucas Nguyen</div><div class="b" style="left:1238px;top:344px;width:81px;height:32px;background:#e1fcf1;border-radius:6px;"></div><div class="t" style="left:1246.5px;top:346.0px;height:29px;line-height:29px;font-size:22.5px;color:#2f6b4e;font-weight:700;-webkit-text-stroke:0.5px #2f6b4e;letter-spacing:-0.35px;transform:scaleX(0.991);transform-origin:left center;">DONE</div><svg class="b" style="left:1686px;top:346px;" width="24" height="24" viewBox="0 0 24 24"><path d="M2.5 14 L12 8.2 L21.5 14" fill="none" stroke="#ea5a3c" stroke-width="4" stroke-linecap="round" stroke-linejoin="round"/></svg><div class="t" style="left:1722px;top:339.0px;height:37px;line-height:37px;font-size:28.5px;color:#7a7c80;-webkit-text-stroke:0.5px #7a7c80;letter-spacing:0.12px;">High</div><div class="b" style="left:86px;top:418px;width:8px;height:8px;background:#758195;border-radius:50%;"></div><div class="t" style="left:114px;top:403.0px;height:37px;line-height:37px;font-size:28.5px;color:#172b4d;-webkit-text-stroke:0.5px #172b4d;letter-spacing:-0.35px;transform:scaleX(0.893);transform-origin:left center;">15</div><svg class="b" style="left:200px;top:408px;" width="28" height="28" viewBox="0 0 28 28"><rect width="28" height="28" rx="4" fill="#65aae3"/><path d="M7.800 14.800l4.200 4.200 8-9.300" fill="none" stroke="#fff" stroke-width="4.300" stroke-linecap="round" stroke-linejoin="round"/></svg><div class="t" style="left:250.5px;top:403.0px;height:37px;line-height:37px;font-size:28.5px;color:#2560d8;-webkit-text-stroke:0.8px #2560d8;letter-spacing:0.35px;">DLA-2</div><div class="t" style="left:458.5px;top:403.0px;height:37px;line-height:37px;font-size:28.5px;color:#172b4d;-webkit-text-stroke:0.5px #172b4d;letter-spacing:0.19px;">Define requirements</div><svg class="b" style="left:902px;top:406px;" width="32" height="32" viewBox="0 0 32 32"><defs><clipPath id="c7"><circle cx="16" cy="16" r="16"/></clipPath><filter id="fc7" x="-10%" y="-10%" width="120%" height="120%"><feGaussianBlur stdDeviation="0.55"/></filter></defs><g clip-path="url(#c7)"><g filter="url(#fc7)"><rect x="-2" y="-2" width="36" height="36" fill="#fff"/><path d="M1 20c0-5 4-9 9-8l3 16-7 3c-3-2-5-6-5-11z" fill="#2a2c9c"/><path d="M22 10c5-2.500 10 0 10 6 0 7-3 12-7 14l-6-4z" fill="#2a2c9c"/><ellipse cx="15" cy="15.500" rx="7" ry="8.800" fill="#e2b9a4"/><path d="M7.500 13c-1.500-7.500 3-11 8-11s9.500 4 7.500 11.500c-.800-3.500-3-5.500-7.500-5.500s-6.500 2-8 5z" fill="#29221f"/><path d="M6 34c1-5 4-7.500 9-7 4-.500 7.500 1.500 9 7z" fill="#e4eaf5"/><path d="M12 23.500h6v4.500l-3 3-3-3z" fill="#d9ab95"/><rect x="8.800" y="12.800" width="5.600" height="4" rx="1.600" fill="#e6c4e4" stroke="#4a3a55" stroke-width=".800"/><rect x="15.800" y="12.800" width="5.600" height="4" rx="1.600" fill="#e6c4e4" stroke="#4a3a55" stroke-width=".800"/><path d="M12.500 21c1.700.800 3.400.800 5 0" fill="none" stroke="#b57868" stroke-width="1"/></g></g></svg><div class="t" style="left:946.5px;top:403.0px;height:37px;line-height:37px;font-size:28.5px;color:#172b4d;-webkit-text-stroke:0.5px #172b4d;letter-spacing:-0.25px;">Peter Tran</div><div class="b" style="left:1238px;top:408px;width:170px;height:32px;background:#eaf1fd;border-radius:6px;"></div><div class="t" style="left:1246.5px;top:410.0px;height:29px;line-height:29px;font-size:22.5px;color:#1d55c8;font-weight:700;-webkit-text-stroke:0.5px #1d55c8;letter-spacing:-0.33px;">IN PROGRESS</div><svg class="b" style="left:1686px;top:410px;" width="24" height="24" viewBox="0 0 24 24"><g stroke="#f4b03c" stroke-width="4" stroke-linecap="round"><path d="M2.500 6.200H21.500"/><path d="M2.500 17.900H21.500"/></g></svg><div class="t" style="left:1722px;top:403.0px;height:37px;line-height:37px;font-size:28.5px;color:#172b4d;-webkit-text-stroke:0.5px #172b4d;letter-spacing:0.28px;">Medium</div><div class="b" style="left:0px;top:454px;width:440px;height:64px;background:#f4d37d;border:2px solid #3d7be0;box-sizing:border-box;"></div><div class="b" style="left:440px;top:454px;width:440px;height:64px;background:#f4d37d;border:2px solid #3d7be0;box-sizing:border-box;"></div><div class="b" style="left:880px;top:454px;width:340px;height:64px;background:#f4d37d;border:2px solid #3d7be0;box-sizing:border-box;"></div><div class="b" style="left:1220px;top:454px;width:440px;height:64px;background:#f4d37d;border:2px solid #3d7be0;box-sizing:border-box;"></div><div class="b" style="left:1660px;top:454px;width:200px;height:64px;background:#f4d37d;border:2px solid #3d7be0;box-sizing:border-box;"></div><div class="b" style="left:86px;top:482px;width:8px;height:8px;background:#758195;border-radius:50%;opacity:.5;"></div><div class="t" style="left:114px;top:467.0px;height:37px;line-height:37px;font-size:28.5px;color:#7a7c80;-webkit-text-stroke:0.5px #7a7c80;letter-spacing:-0.35px;transform:scaleX(0.893);transform-origin:left center;">16</div><svg class="b" style="left:200px;top:472px;" width="28" height="28" viewBox="0 0 28 28"><rect width="28" height="28" rx="4" fill="#65aae3"/><path d="M7.800 14.800l4.200 4.200 8-9.300" fill="none" stroke="#fff" stroke-width="4.300" stroke-linecap="round" stroke-linejoin="round"/></svg><div class="t" style="left:250.5px;top:467.0px;height:37px;line-height:37px;font-size:28.5px;color:#2560d8;-webkit-text-stroke:0.8px #2560d8;letter-spacing:0.43px;">DLA-6</div><div class="t" style="left:458.5px;top:467.0px;height:37px;line-height:37px;font-size:28.5px;color:#7a7c80;-webkit-text-stroke:0.5px #7a7c80;letter-spacing:0.09px;">Implement an internationaliza...</div><div class="b" style="left:898px;top:466px;width:40px;height:40px;background:#fff;border-radius:50%;"></div><svg class="b" style="left:902px;top:470px;" width="32" height="32" viewBox="0 0 32 32"><defs><clipPath id="c8"><circle cx="16" cy="16" r="16"/></clipPath><filter id="fc8" x="-10%" y="-10%" width="120%" height="120%"><feGaussianBlur stdDeviation="0.55"/></filter></defs><g clip-path="url(#c8)"><g filter="url(#fc8)"><rect x="-2" y="-2" width="36" height="36" fill="#7c8c56"/><path d="M-2 -2H14V9L-2 12z" fill="#9cc4e6"/><circle cx="6" cy="12" r="5.500" fill="#93a55e"/><circle cx="11" cy="4" r="4.500" fill="#6d8a44"/><circle cx="25" cy="8" r="8" fill="#557538"/><circle cx="20" cy="2" r="4" fill="#76944c"/><circle cx="30" cy="15" r="4" fill="#55733a"/><path d="M-2 21L12 19V34H-2z" fill="#b8ab5c"/><path d="M-2 27L12 23V34H-2z" fill="#b9b2a2"/><path d="M20 20L34 17V34H20z" fill="#b5a98f"/><path d="M23 14L34 13V20L22 22z" fill="#9a9f7a"/><path d="M10.500 12.500c0-2.500 2-3.500 5.700-3.500s5.800 1 5.800 3.500l1 11-2 1.500V29H11.500V25l-2-1.500z" fill="#2b3b52"/><path d="M13.600 10.500h5.200l.700 17.500h-6.600z" fill="#d8dde8"/><rect x="11.500" y="27.500" width="10" height="6" fill="#232c3a"/><ellipse cx="16.200" cy="6.200" rx="2.700" ry="3.100" fill="#3b2c27"/><ellipse cx="16.200" cy="7.200" rx="1.900" ry="2" fill="#8a6a58"/></g></g></svg><div class="t" style="left:946.5px;top:467.0px;height:37px;line-height:37px;font-size:28.5px;color:#7a7c80;-webkit-text-stroke:0.5px #7a7c80;letter-spacing:-0.02px;">Lucas Nguyen</div><div class="b" style="left:1238px;top:472px;width:170px;height:32px;background:#eaf1fd;border-radius:6px;"></div><div class="t" style="left:1246.5px;top:474.0px;height:29px;line-height:29px;font-size:22.5px;color:#1d55c8;font-weight:700;-webkit-text-stroke:0.5px #1d55c8;letter-spacing:-0.33px;">IN PROGRESS</div><svg class="b" style="left:1686px;top:474px;" width="24" height="24" viewBox="0 0 24 24"><path d="M2.5 14 L12 8.2 L21.5 14" fill="none" stroke="#ea5a3c" stroke-width="4" stroke-linecap="round" stroke-linejoin="round"/></svg><div class="t" style="left:1722px;top:467.0px;height:37px;line-height:37px;font-size:28.5px;color:#7a7c80;-webkit-text-stroke:0.5px #7a7c80;letter-spacing:0.12px;">High</div><div class="b" style="left:1660px;top:518px;width:200px;height:64px;background:#f4af97;border:2px solid #dc9c87;box-sizing:border-box;"></div><svg class="b" style="left:80px;top:543px;" width="20" height="14" viewBox="0 0 20 14"><path d="M4 5l6 6 6-6" fill="none" stroke="#9199ae" stroke-width="4" stroke-linecap="round" stroke-linejoin="round"/></svg><div class="t" style="left:114px;top:531.0px;height:37px;line-height:37px;font-size:28.5px;color:#172b4d;-webkit-text-stroke:0.5px #172b4d;letter-spacing:-0.35px;transform:scaleX(0.848);transform-origin:left center;">17</div><svg class="b" style="left:200px;top:536px;" width="28" height="28" viewBox="0 0 28 28"><rect width="28" height="28" rx="4" fill="#65aae3"/><path d="M7.800 14.800l4.200 4.200 8-9.300" fill="none" stroke="#fff" stroke-width="4.300" stroke-linecap="round" stroke-linejoin="round"/></svg><div class="t" style="left:250.5px;top:531.0px;height:37px;line-height:37px;font-size:28.5px;color:#2560d8;-webkit-text-stroke:0.8px #2560d8;letter-spacing:0.43px;">DLA-8</div><div class="t" style="left:458.5px;top:531.0px;height:37px;line-height:37px;font-size:28.5px;color:#172b4d;-webkit-text-stroke:0.5px #172b4d;letter-spacing:0.19px;">Translate the UI and content</div><svg class="b" style="left:902px;top:534px;" width="32" height="32" viewBox="0 0 32 32"><defs><clipPath id="c9"><circle cx="16" cy="16" r="16"/></clipPath><filter id="fc9" x="-10%" y="-10%" width="120%" height="120%"><feGaussianBlur stdDeviation="0.55"/></filter></defs><g clip-path="url(#c9)"><g filter="url(#fc9)"><rect x="-2" y="-2" width="36" height="36" fill="#e6e9f5"/><rect x="-2" y="15" width="36" height="19" fill="#7c934c"/><rect x="-2" y="14" width="36" height="3" fill="#9cae74"/><path d="M12 11c0-5.500 4-8 8.500-8s8 3 8 8.500c0 4 .500 7 1.500 10h-7l-9-2c-2-3-2-5.500-2-8.500z" fill="#2a2022"/><ellipse cx="20" cy="14.500" rx="5.400" ry="6.400" fill="#ecc8ba"/><path d="M14 10c2-3.500 8.500-4.500 12.500 0-3.500-1.200-8.500-1.200-12.500 0z" fill="#2a2022"/><path d="M7 34c1-8 6-12 13-11 5 0 8.500 3 9.500 8l-4 3z" fill="#e8c2ae"/><path d="M12 27l3 2M17 25l2 3M22 27l2-2M10 31l3-1" stroke="#f4e6dc" stroke-width="1.200"/><circle cx="20.500" cy="18" r=".900" fill="#c8453f"/></g></g></svg><div class="t" style="left:946.5px;top:531.0px;height:37px;line-height:37px;font-size:28.5px;color:#172b4d;-webkit-text-stroke:0.5px #172b4d;letter-spacing:-0.30px;">Vi Tran</div><div class="b" style="left:1238px;top:536px;width:87px;height:32px;background:#f1f2f4;border-radius:6px;"></div><div class="t" style="left:1246.5px;top:538.0px;height:29px;line-height:29px;font-size:22.5px;color:#44546f;font-weight:700;-webkit-text-stroke:0.5px #44546f;letter-spacing:-0.29px;">TO DO</div><svg class="b" style="left:1686px;top:538px;" width="24" height="24" viewBox="0 0 24 24"><g stroke="#f4b03c" stroke-width="4" stroke-linecap="round"><path d="M2.500 6.200H21.500"/><path d="M2.500 17.900H21.500"/></g></svg><div class="t" style="left:1722px;top:531.0px;height:37px;line-height:37px;font-size:28.5px;color:#172b4d;-webkit-text-stroke:0.5px #172b4d;letter-spacing:0.28px;">Medium</div><div class="b" style="left:86px;top:610px;width:8px;height:8px;background:#758195;border-radius:50%;"></div><svg class="b" style="left:122px;top:572px;" width="48" height="56" viewBox="0 0 48 56"><path d="M2 0V42a8 8 0 0 0 8 8H46" fill="none" stroke="#e0e2e8" stroke-width="3"/></svg><div class="t" style="left:177px;top:595.0px;height:37px;line-height:37px;font-size:28.5px;color:#172b4d;-webkit-text-stroke:0.5px #172b4d;letter-spacing:-0.35px;transform:scaleX(0.808);transform-origin:left center;">17.1</div><svg class="b" style="left:264px;top:600px;" width="28" height="28" viewBox="0 0 28 28"><rect width="28" height="28" rx="4" fill="#65aae3"/><rect x="6" y="6" width="9.800" height="9.800" rx="1.800" fill="none" stroke="#fff" stroke-width="1.900"/><rect x="11" y="11" width="12" height="12" rx="2" fill="#fff"/></svg><div class="t" style="left:313.5px;top:595.0px;height:37px;line-height:37px;font-size:28.5px;color:#2560d8;-webkit-text-stroke:0.8px #2560d8;letter-spacing:0.73px;">DLA-22</div><div class="t" style="left:458.5px;top:595.0px;height:37px;line-height:37px;font-size:28.5px;color:#172b4d;-webkit-text-stroke:0.5px #172b4d;letter-spacing:-0.06px;">new sub hahah</div><svg class="b" style="left:902px;top:598px;" width="32" height="32" viewBox="0 0 32 32"><circle cx="16" cy="16" r="16" fill="#5e6c84"/><circle cx="16" cy="11" r="5.600" fill="#fff"/><rect x="8" y="17.500" width="16" height="10.500" rx="3.500" fill="#fff"/></svg><div class="t" style="left:946.5px;top:595.0px;height:37px;line-height:37px;font-size:28.5px;color:#626f86;-webkit-text-stroke:0.5px #626f86;letter-spacing:-0.06px;">Unassigned</div><div class="b" style="left:1238px;top:600px;width:87px;height:32px;background:#f1f2f4;border-radius:6px;"></div><div class="t" style="left:1246.5px;top:602.0px;height:29px;line-height:29px;font-size:22.5px;color:#44546f;font-weight:700;-webkit-text-stroke:0.5px #44546f;letter-spacing:-0.29px;">TO DO</div><svg class="b" style="left:1686px;top:602px;" width="24" height="24" viewBox="0 0 24 24"><path d="M2.5 10.2 L12 15.8 L21.5 10.2" fill="none" stroke="#2f6bf6" stroke-width="4" stroke-linecap="round" stroke-linejoin="round"/></svg><div class="t" style="left:1722px;top:595.0px;height:37px;line-height:37px;font-size:28.5px;color:#172b4d;-webkit-text-stroke:0.5px #172b4d;letter-spacing:-0.35px;transform:scaleX(0.985);transform-origin:left center;">Low</div><div class="b" style="left:86px;top:674px;width:8px;height:8px;background:#758195;border-radius:50%;"></div><div class="t" style="left:114px;top:659.0px;height:37px;line-height:37px;font-size:28.5px;color:#172b4d;-webkit-text-stroke:0.5px #172b4d;letter-spacing:-0.35px;transform:scaleX(0.893);transform-origin:left center;">18</div><svg class="b" style="left:200px;top:664px;" width="28" height="28" viewBox="0 0 28 28"><rect width="28" height="28" rx="4" fill="#65aae3"/><path d="M7.800 14.800l4.200 4.200 8-9.300" fill="none" stroke="#fff" stroke-width="4.300" stroke-linecap="round" stroke-linejoin="round"/></svg><div class="t" style="left:250.5px;top:659.0px;height:37px;line-height:37px;font-size:28.5px;color:#2560d8;-webkit-text-stroke:0.8px #2560d8;letter-spacing:-0.23px;">DLA-12</div><div class="t" style="left:458.5px;top:659.0px;height:37px;line-height:37px;font-size:28.5px;color:#172b4d;-webkit-text-stroke:0.5px #172b4d;letter-spacing:0.30px;">Collect user feedback</div><svg class="b" style="left:902px;top:662px;" width="32" height="32" viewBox="0 0 32 32"><defs><clipPath id="c11"><circle cx="16" cy="16" r="16"/></clipPath><filter id="fc11" x="-10%" y="-10%" width="120%" height="120%"><feGaussianBlur stdDeviation="0.55"/></filter></defs><g clip-path="url(#c11)"><g filter="url(#fc11)"><rect x="-2" y="-2" width="36" height="36" fill="#e2e3e3"/><rect x="22" y="-2" width="12" height="36" fill="#d2d4d5"/><path d="M-2 9l10-3v5l-10 3z" fill="#f3f3f3"/><ellipse cx="14" cy="14.500" rx="5.400" ry="6.800" fill="#dbb29b"/><path d="M8 13c-1.500-6.500 2.500-9 7-9s7.500 2.500 6 9c-.800-3-2-4.500-6-4.500s-5 1.500-7 4.500z" fill="#211d1d"/><path d="M3 34c1-6 4-9 9.500-9l3 2.500 3-2.500c4.500 0 7 3 8 9z" fill="#28282c"/><path d="M12 23h5v4l-2.500 2-2.500-2z" fill="#d3a68e"/><path d="M6 28l3 1.500M20 27l3 2M9 32l3-2M18 31l3 1.500M13 29l1 3" stroke="#f0f0f0" stroke-width="1.300"/><path d="M8.800 12.800h4.800v3.400H8.800zM14.800 12.800h4.800v3.400h-4.800z" fill="none" stroke="#1c1c1c" stroke-width="1"/></g></g></svg><div class="t" style="left:946.5px;top:659.0px;height:37px;line-height:37px;font-size:28.5px;color:#172b4d;-webkit-text-stroke:0.5px #172b4d;letter-spacing:-0.35px;transform:scaleX(0.996);transform-origin:left center;">Liam Do</div><div class="b" style="left:1238px;top:664px;width:87px;height:32px;background:#f1f2f4;border-radius:6px;"></div><div class="t" style="left:1246.5px;top:666.0px;height:29px;line-height:29px;font-size:22.5px;color:#44546f;font-weight:700;-webkit-text-stroke:0.5px #44546f;letter-spacing:-0.29px;">TO DO</div><svg class="b" style="left:1686px;top:666px;" width="24" height="24" viewBox="0 0 24 24"><path d="M2.5 5.2 L12 10.8 L21.5 5.2" fill="none" stroke="#4a83f7" stroke-width="4" stroke-linecap="round" stroke-linejoin="round"/><path d="M2.5 14.2 L12 19.8 L21.5 14.2" fill="none" stroke="#2c63f6" stroke-width="4" stroke-linecap="round" stroke-linejoin="round"/></svg><div class="t" style="left:1722px;top:659.0px;height:37px;line-height:37px;font-size:28.5px;color:#172b4d;-webkit-text-stroke:0.5px #172b4d;letter-spacing:-0.06px;">Lowest</div><div class="b" style="left:1660px;top:710px;width:200px;height:64px;background:#f4af97;border:2px solid #dc9c87;box-sizing:border-box;"></div><svg class="b" style="left:80px;top:735px;" width="20" height="14" viewBox="0 0 20 14"><path d="M4 5l6 6 6-6" fill="none" stroke="#9199ae" stroke-width="4" stroke-linecap="round" stroke-linejoin="round"/></svg><div class="t" style="left:114px;top:723.0px;height:37px;line-height:37px;font-size:28.5px;color:#172b4d;-webkit-text-stroke:0.5px #172b4d;letter-spacing:-0.35px;transform:scaleX(0.893);transform-origin:left center;">19</div><svg class="b" style="left:200px;top:728px;" width="28" height="28" viewBox="0 0 28 28"><rect width="28" height="28" rx="4" fill="#65aae3"/><path d="M7.800 14.800l4.200 4.200 8-9.300" fill="none" stroke="#fff" stroke-width="4.300" stroke-linecap="round" stroke-linejoin="round"/></svg><div class="t" style="left:250.5px;top:723.0px;height:37px;line-height:37px;font-size:28.5px;color:#2560d8;-webkit-text-stroke:0.8px #2560d8;letter-spacing:-0.11px;">DLA-13</div><div class="t" style="left:458.5px;top:723.0px;height:37px;line-height:37px;font-size:28.5px;color:#172b4d;-webkit-text-stroke:0.5px #172b4d;letter-spacing:0.20px;">Test new features</div><svg class="b" style="left:902px;top:726px;" width="32" height="32" viewBox="0 0 32 32"><defs><clipPath id="c12"><circle cx="16" cy="16" r="16"/></clipPath><filter id="fc12" x="-10%" y="-10%" width="120%" height="120%"><feGaussianBlur stdDeviation="0.55"/></filter></defs><g clip-path="url(#c12)"><g filter="url(#fc12)"><rect x="-2" y="-2" width="36" height="36" fill="#e6e9f5"/><rect x="-2" y="15" width="36" height="19" fill="#7c934c"/><rect x="-2" y="14" width="36" height="3" fill="#9cae74"/><path d="M12 11c0-5.500 4-8 8.500-8s8 3 8 8.500c0 4 .500 7 1.500 10h-7l-9-2c-2-3-2-5.500-2-8.500z" fill="#2a2022"/><ellipse cx="20" cy="14.500" rx="5.400" ry="6.400" fill="#ecc8ba"/><path d="M14 10c2-3.500 8.500-4.500 12.500 0-3.500-1.200-8.500-1.200-12.500 0z" fill="#2a2022"/><path d="M7 34c1-8 6-12 13-11 5 0 8.500 3 9.500 8l-4 3z" fill="#e8c2ae"/><path d="M12 27l3 2M17 25l2 3M22 27l2-2M10 31l3-1" stroke="#f4e6dc" stroke-width="1.200"/><circle cx="20.500" cy="18" r=".900" fill="#c8453f"/></g></g></svg><div class="t" style="left:946.5px;top:723.0px;height:37px;line-height:37px;font-size:28.5px;color:#172b4d;-webkit-text-stroke:0.5px #172b4d;letter-spacing:-0.30px;">Vi Tran</div><div class="b" style="left:1238px;top:728px;width:87px;height:32px;background:#f1f2f4;border-radius:6px;"></div><div class="t" style="left:1246.5px;top:730.0px;height:29px;line-height:29px;font-size:22.5px;color:#44546f;font-weight:700;-webkit-text-stroke:0.5px #44546f;letter-spacing:-0.29px;">TO DO</div><svg class="b" style="left:1686px;top:730px;" width="24" height="24" viewBox="0 0 24 24"><g stroke="#f4b03c" stroke-width="4" stroke-linecap="round"><path d="M2.500 6.200H21.500"/><path d="M2.500 17.900H21.500"/></g></svg><div class="t" style="left:1722px;top:723.0px;height:37px;line-height:37px;font-size:28.5px;color:#172b4d;-webkit-text-stroke:0.5px #172b4d;letter-spacing:0.28px;">Medium</div><div class="b" style="left:1660px;top:774px;width:200px;height:64px;background:#f4af97;border:2px solid #dc9c87;box-sizing:border-box;"></div><div class="b" style="left:86px;top:802px;width:8px;height:8px;background:#758195;border-radius:50%;"></div><svg class="b" style="left:122px;top:764px;" width="48" height="56" viewBox="0 0 48 56"><path d="M2 0V42a8 8 0 0 0 8 8H46" fill="none" stroke="#e0e2e8" stroke-width="3"/></svg><div class="t" style="left:177px;top:787.0px;height:37px;line-height:37px;font-size:28.5px;color:#172b4d;-webkit-text-stroke:0.5px #172b4d;letter-spacing:-0.35px;transform:scaleX(0.873);transform-origin:left center;">19.1</div><svg class="b" style="left:264px;top:792px;" width="28" height="28" viewBox="0 0 28 28"><rect width="28" height="28" rx="4" fill="#65aae3"/><rect x="6" y="6" width="9.800" height="9.800" rx="1.800" fill="none" stroke="#fff" stroke-width="1.900"/><rect x="11" y="11" width="12" height="12" rx="2" fill="#fff"/></svg><div class="t" style="left:313.5px;top:787.0px;height:37px;line-height:37px;font-size:28.5px;color:#2560d8;-webkit-text-stroke:0.8px #2560d8;letter-spacing:0.87px;">DLA-20</div><div class="t" style="left:458.5px;top:787.0px;height:37px;line-height:37px;font-size:28.5px;color:#172b4d;-webkit-text-stroke:0.5px #172b4d;letter-spacing:0.33px;">check bug</div><svg class="b" style="left:902px;top:790px;" width="32" height="32" viewBox="0 0 32 32"><defs><clipPath id="c13"><circle cx="16" cy="16" r="16"/></clipPath><filter id="fc13" x="-10%" y="-10%" width="120%" height="120%"><feGaussianBlur stdDeviation="0.55"/></filter></defs><g clip-path="url(#c13)"><g filter="url(#fc13)"><rect x="-2" y="-2" width="36" height="36" fill="#e6e9f5"/><rect x="-2" y="15" width="36" height="19" fill="#7c934c"/><rect x="-2" y="14" width="36" height="3" fill="#9cae74"/><path d="M12 11c0-5.500 4-8 8.500-8s8 3 8 8.500c0 4 .500 7 1.500 10h-7l-9-2c-2-3-2-5.500-2-8.500z" fill="#2a2022"/><ellipse cx="20" cy="14.500" rx="5.400" ry="6.400" fill="#ecc8ba"/><path d="M14 10c2-3.500 8.500-4.500 12.500 0-3.500-1.200-8.500-1.200-12.500 0z" fill="#2a2022"/><path d="M7 34c1-8 6-12 13-11 5 0 8.500 3 9.500 8l-4 3z" fill="#e8c2ae"/><path d="M12 27l3 2M17 25l2 3M22 27l2-2M10 31l3-1" stroke="#f4e6dc" stroke-width="1.200"/><circle cx="20.500" cy="18" r=".900" fill="#c8453f"/></g></g></svg><div class="t" style="left:946.5px;top:787.0px;height:37px;line-height:37px;font-size:28.5px;color:#172b4d;-webkit-text-stroke:0.5px #172b4d;letter-spacing:-0.30px;">Vi Tran</div><div class="b" style="left:1238px;top:792px;width:87px;height:32px;background:#f1f2f4;border-radius:6px;"></div><div class="t" style="left:1246.5px;top:794.0px;height:29px;line-height:29px;font-size:22.5px;color:#44546f;font-weight:700;-webkit-text-stroke:0.5px #44546f;letter-spacing:-0.29px;">TO DO</div><svg class="b" style="left:1686px;top:794px;" width="24" height="24" viewBox="0 0 24 24"><path d="M2.5 10.2 L12 15.8 L21.5 10.2" fill="none" stroke="#2f6bf6" stroke-width="4" stroke-linecap="round" stroke-linejoin="round"/></svg><div class="t" style="left:1722px;top:787.0px;height:37px;line-height:37px;font-size:28.5px;color:#172b4d;-webkit-text-stroke:0.5px #172b4d;letter-spacing:-0.35px;transform:scaleX(0.985);transform-origin:left center;">Low</div><div class="b" style="left:86px;top:866px;width:8px;height:8px;background:#758195;border-radius:50%;"></div><div class="t" style="left:114px;top:851.0px;height:37px;line-height:37px;font-size:28.5px;color:#172b4d;-webkit-text-stroke:0.5px #172b4d;letter-spacing:0.30px;">20</div><svg class="b" style="left:200px;top:856px;" width="28" height="28" viewBox="0 0 28 28"><rect width="28" height="28" rx="4" fill="#65aae3"/><path d="M7.800 14.800l4.200 4.200 8-9.300" fill="none" stroke="#fff" stroke-width="4.300" stroke-linecap="round" stroke-linejoin="round"/></svg><div class="t" style="left:250.5px;top:851.0px;height:37px;line-height:37px;font-size:28.5px;color:#2560d8;-webkit-text-stroke:0.8px #2560d8;letter-spacing:0.13px;">DLA-7</div><div class="t" style="left:458.5px;top:851.0px;height:37px;line-height:37px;font-size:28.5px;color:#172b4d;-webkit-text-stroke:0.5px #172b4d;letter-spacing:0.13px;">Prepare the codebase for loc...</div><svg class="b" style="left:902px;top:854px;" width="32" height="32" viewBox="0 0 32 32"><defs><clipPath id="c14"><circle cx="16" cy="16" r="16"/></clipPath><filter id="fc14" x="-10%" y="-10%" width="120%" height="120%"><feGaussianBlur stdDeviation="0.55"/></filter></defs><g clip-path="url(#c14)"><g filter="url(#fc14)"><rect x="-2" y="-2" width="36" height="36" fill="#e2e3e3"/><rect x="22" y="-2" width="12" height="36" fill="#d2d4d5"/><path d="M-2 9l10-3v5l-10 3z" fill="#f3f3f3"/><ellipse cx="14" cy="14.500" rx="5.400" ry="6.800" fill="#dbb29b"/><path d="M8 13c-1.500-6.500 2.500-9 7-9s7.500 2.500 6 9c-.800-3-2-4.500-6-4.500s-5 1.500-7 4.500z" fill="#211d1d"/><path d="M3 34c1-6 4-9 9.500-9l3 2.500 3-2.500c4.500 0 7 3 8 9z" fill="#28282c"/><path d="M12 23h5v4l-2.500 2-2.500-2z" fill="#d3a68e"/><path d="M6 28l3 1.500M20 27l3 2M9 32l3-2M18 31l3 1.500M13 29l1 3" stroke="#f0f0f0" stroke-width="1.300"/><path d="M8.800 12.800h4.800v3.400H8.800zM14.800 12.800h4.800v3.400h-4.800z" fill="none" stroke="#1c1c1c" stroke-width="1"/></g></g></svg><div class="t" style="left:946.5px;top:851.0px;height:37px;line-height:37px;font-size:28.5px;color:#172b4d;-webkit-text-stroke:0.5px #172b4d;letter-spacing:-0.35px;transform:scaleX(0.996);transform-origin:left center;">Liam Do</div><div class="b" style="left:1238px;top:856px;width:81px;height:32px;background:#e1fcf1;border-radius:6px;"></div><div class="t" style="left:1246.5px;top:858.0px;height:29px;line-height:29px;font-size:22.5px;color:#2f6b4e;font-weight:700;-webkit-text-stroke:0.5px #2f6b4e;letter-spacing:-0.35px;transform:scaleX(0.991);transform-origin:left center;">DONE</div><svg class="b" style="left:1686px;top:858px;" width="24" height="24" viewBox="0 0 24 24"><path d="M2.5 18.8 L12 13.2 L21.5 18.8" fill="none" stroke="#ee7558" stroke-width="4" stroke-linecap="round" stroke-linejoin="round"/><path d="M2.5 10 L12 4.4 L21.5 10" fill="none" stroke="#e8573a" stroke-width="4" stroke-linecap="round" stroke-linejoin="round"/></svg><div class="t" style="left:1722px;top:851.0px;height:37px;line-height:37px;font-size:28.5px;color:#172b4d;-webkit-text-stroke:0.5px #172b4d;letter-spacing:0.56px;">Highest</div><div class="b" style="left:86px;top:930px;width:8px;height:8px;background:#758195;border-radius:50%;"></div><div class="t" style="left:114px;top:915.0px;height:37px;line-height:37px;font-size:28.5px;color:#172b4d;-webkit-text-stroke:0.5px #172b4d;letter-spacing:-0.35px;transform:scaleX(0.861);transform-origin:left center;">21</div><svg class="b" style="left:200px;top:920px;" width="28" height="28" viewBox="0 0 28 28"><rect width="28" height="28" rx="4" fill="#65aae3"/><path d="M7.800 14.800l4.200 4.200 8-9.300" fill="none" stroke="#fff" stroke-width="4.300" stroke-linecap="round" stroke-linejoin="round"/></svg><div class="t" style="left:250.5px;top:915.0px;height:37px;line-height:37px;font-size:28.5px;color:#2560d8;-webkit-text-stroke:0.8px #2560d8;letter-spacing:-0.09px;">DLA-10</div><div class="t" style="left:458.5px;top:915.0px;height:37px;line-height:37px;font-size:28.5px;color:#172b4d;-webkit-text-stroke:0.5px #172b4d;letter-spacing:0.24px;">Integrate with payment gate...</div><svg class="b" style="left:902px;top:918px;" width="32" height="32" viewBox="0 0 32 32"><defs><clipPath id="c15"><circle cx="16" cy="16" r="16"/></clipPath><filter id="fc15" x="-10%" y="-10%" width="120%" height="120%"><feGaussianBlur stdDeviation="0.55"/></filter></defs><g clip-path="url(#c15)"><g filter="url(#fc15)"><rect x="-2" y="-2" width="36" height="36" fill="#fff"/><path d="M1 20c0-5 4-9 9-8l3 16-7 3c-3-2-5-6-5-11z" fill="#2a2c9c"/><path d="M22 10c5-2.500 10 0 10 6 0 7-3 12-7 14l-6-4z" fill="#2a2c9c"/><ellipse cx="15" cy="15.500" rx="7" ry="8.800" fill="#e2b9a4"/><path d="M7.500 13c-1.500-7.500 3-11 8-11s9.500 4 7.500 11.500c-.800-3.500-3-5.500-7.500-5.500s-6.500 2-8 5z" fill="#29221f"/><path d="M6 34c1-5 4-7.500 9-7 4-.500 7.500 1.500 9 7z" fill="#e4eaf5"/><path d="M12 23.500h6v4.500l-3 3-3-3z" fill="#d9ab95"/><rect x="8.800" y="12.800" width="5.600" height="4" rx="1.600" fill="#e6c4e4" stroke="#4a3a55" stroke-width=".800"/><rect x="15.800" y="12.800" width="5.600" height="4" rx="1.600" fill="#e6c4e4" stroke="#4a3a55" stroke-width=".800"/><path d="M12.500 21c1.700.800 3.400.800 5 0" fill="none" stroke="#b57868" stroke-width="1"/></g></g></svg><div class="t" style="left:946.5px;top:915.0px;height:37px;line-height:37px;font-size:28.5px;color:#172b4d;-webkit-text-stroke:0.5px #172b4d;letter-spacing:-0.25px;">Peter Tran</div><div class="b" style="left:1238px;top:920px;width:81px;height:32px;background:#e1fcf1;border-radius:6px;"></div><div class="t" style="left:1246.5px;top:922.0px;height:29px;line-height:29px;font-size:22.5px;color:#2f6b4e;font-weight:700;-webkit-text-stroke:0.5px #2f6b4e;letter-spacing:-0.35px;transform:scaleX(0.991);transform-origin:left center;">DONE</div><svg class="b" style="left:1686px;top:922px;" width="24" height="24" viewBox="0 0 24 24"><path d="M2.5 18.8 L12 13.2 L21.5 18.8" fill="none" stroke="#ee7558" stroke-width="4" stroke-linecap="round" stroke-linejoin="round"/><path d="M2.5 10 L12 4.4 L21.5 10" fill="none" stroke="#e8573a" stroke-width="4" stroke-linecap="round" stroke-linejoin="round"/></svg><div class="t" style="left:1722px;top:915.0px;height:37px;line-height:37px;font-size:28.5px;color:#172b4d;-webkit-text-stroke:0.5px #172b4d;letter-spacing:0.56px;">Highest</div><div class="b" style="left:86px;top:994px;width:8px;height:8px;background:#758195;border-radius:50%;"></div><div class="t" style="left:114px;top:979.0px;height:37px;line-height:37px;font-size:28.5px;color:#172b4d;-webkit-text-stroke:0.5px #172b4d;letter-spacing:0.30px;">22</div><svg class="b" style="left:200px;top:984px;" width="28" height="28" viewBox="0 0 28 28"><rect width="28" height="28" rx="4" fill="#65aae3"/><path d="M7.800 14.800l4.200 4.200 8-9.300" fill="none" stroke="#fff" stroke-width="4.300" stroke-linecap="round" stroke-linejoin="round"/></svg><div class="t" style="left:250.5px;top:979.0px;height:37px;line-height:37px;font-size:28.5px;color:#2560d8;-webkit-text-stroke:0.8px #2560d8;letter-spacing:-0.35px;">DLA-11</div><div class="t" style="left:458.5px;top:979.0px;height:37px;line-height:37px;font-size:28.5px;color:#172b4d;-webkit-text-stroke:0.5px #172b4d;letter-spacing:0.12px;">Implement secure payment p...</div><svg class="b" style="left:902px;top:982px;" width="32" height="32" viewBox="0 0 32 32"><defs><clipPath id="c16"><circle cx="16" cy="16" r="16"/></clipPath><filter id="fc16" x="-10%" y="-10%" width="120%" height="120%"><feGaussianBlur stdDeviation="0.55"/></filter></defs><g clip-path="url(#c16)"><g filter="url(#fc16)"><rect x="-2" y="-2" width="36" height="36" fill="#7c8c56"/><path d="M-2 -2H14V9L-2 12z" fill="#9cc4e6"/><circle cx="6" cy="12" r="5.500" fill="#93a55e"/><circle cx="11" cy="4" r="4.500" fill="#6d8a44"/><circle cx="25" cy="8" r="8" fill="#557538"/><circle cx="20" cy="2" r="4" fill="#76944c"/><circle cx="30" cy="15" r="4" fill="#55733a"/><path d="M-2 21L12 19V34H-2z" fill="#b8ab5c"/><path d="M-2 27L12 23V34H-2z" fill="#b9b2a2"/><path d="M20 20L34 17V34H20z" fill="#b5a98f"/><path d="M23 14L34 13V20L22 22z" fill="#9a9f7a"/><path d="M10.500 12.500c0-2.500 2-3.500 5.700-3.500s5.800 1 5.800 3.500l1 11-2 1.500V29H11.500V25l-2-1.500z" fill="#2b3b52"/><path d="M13.600 10.500h5.200l.700 17.500h-6.600z" fill="#d8dde8"/><rect x="11.500" y="27.500" width="10" height="6" fill="#232c3a"/><ellipse cx="16.200" cy="6.200" rx="2.700" ry="3.100" fill="#3b2c27"/><ellipse cx="16.200" cy="7.200" rx="1.900" ry="2" fill="#8a6a58"/></g></g></svg><div class="t" style="left:946.5px;top:979.0px;height:37px;line-height:37px;font-size:28.5px;color:#172b4d;-webkit-text-stroke:0.5px #172b4d;letter-spacing:-0.02px;">Lucas Nguyen</div><div class="b" style="left:1238px;top:984px;width:81px;height:32px;background:#e1fcf1;border-radius:6px;"></div><div class="t" style="left:1246.5px;top:986.0px;height:29px;line-height:29px;font-size:22.5px;color:#2f6b4e;font-weight:700;-webkit-text-stroke:0.5px #2f6b4e;letter-spacing:-0.35px;transform:scaleX(0.991);transform-origin:left center;">DONE</div><svg class="b" style="left:1686px;top:986px;" width="24" height="24" viewBox="0 0 24 24"><path d="M2.5 18.8 L12 13.2 L21.5 18.8" fill="none" stroke="#ee7558" stroke-width="4" stroke-linecap="round" stroke-linejoin="round"/><path d="M2.5 10 L12 4.4 L21.5 10" fill="none" stroke="#e8573a" stroke-width="4" stroke-linecap="round" stroke-linejoin="round"/></svg><div class="t" style="left:1722px;top:979.0px;height:37px;line-height:37px;font-size:28.5px;color:#172b4d;-webkit-text-stroke:0.5px #172b4d;letter-spacing:0.56px;">Highest</div></div>
<div class="b" style="left:1910px;top:292px;width:48px;height:1008px;overflow:hidden;"><div class="b" style="left:0px;top:0px;width:2px;height:1008px;background:#dddfe5;"></div><div class="b" style="left:2px;top:0px;width:44px;height:1008px;background:#fff;"></div><div class="b" style="left:46px;top:0px;width:2px;height:1008px;background:#dddfe5;"></div><div class="b" style="left:2px;top:4px;width:44px;height:2px;background:#dddfe5;"></div><div class="b" style="left:2px;top:68px;width:44px;height:2px;background:#dddfe5;"></div><div class="b" style="left:2px;top:132px;width:44px;height:2px;background:#dddfe5;"></div><div class="b" style="left:2px;top:196px;width:44px;height:2px;background:#dddfe5;"></div><div class="b" style="left:2px;top:260px;width:44px;height:2px;background:#dddfe5;"></div><div class="b" style="left:2px;top:324px;width:44px;height:2px;background:#dddfe5;"></div><div class="b" style="left:2px;top:388px;width:44px;height:2px;background:#dddfe5;"></div><div class="b" style="left:2px;top:452px;width:44px;height:2px;background:#dddfe5;"></div><div class="b" style="left:2px;top:516px;width:44px;height:2px;background:#dddfe5;"></div><div class="b" style="left:2px;top:580px;width:44px;height:2px;background:#dddfe5;"></div><div class="b" style="left:2px;top:644px;width:44px;height:2px;background:#dddfe5;"></div><div class="b" style="left:2px;top:708px;width:44px;height:2px;background:#dddfe5;"></div><div class="b" style="left:2px;top:772px;width:44px;height:2px;background:#dddfe5;"></div><div class="b" style="left:2px;top:836px;width:44px;height:2px;background:#dddfe5;"></div><div class="b" style="left:2px;top:900px;width:44px;height:2px;background:#dddfe5;"></div><div class="b" style="left:2px;top:964px;width:44px;height:2px;background:#dddfe5;"></div><div class="b" style="left:2px;top:1028px;width:44px;height:2px;background:#dddfe5;"></div><svg class="b" style="left:19px;top:23px;" width="10" height="28" viewBox="0 0 10 28"><g fill="#8590a2"><circle cx="5" cy="4.600" r="2.900"/><circle cx="5" cy="14" r="2.900"/><circle cx="5" cy="23.400" r="2.900"/></g></svg><svg class="b" style="left:19px;top:87px;" width="10" height="28" viewBox="0 0 10 28"><g fill="#8590a2"><circle cx="5" cy="4.600" r="2.900"/><circle cx="5" cy="14" r="2.900"/><circle cx="5" cy="23.400" r="2.900"/></g></svg><svg class="b" style="left:19px;top:151px;" width="10" height="28" viewBox="0 0 10 28"><g fill="#8590a2"><circle cx="5" cy="4.600" r="2.900"/><circle cx="5" cy="14" r="2.900"/><circle cx="5" cy="23.400" r="2.900"/></g></svg><svg class="b" style="left:19px;top:215px;" width="10" height="28" viewBox="0 0 10 28"><g fill="#8590a2"><circle cx="5" cy="4.600" r="2.900"/><circle cx="5" cy="14" r="2.900"/><circle cx="5" cy="23.400" r="2.900"/></g></svg><svg class="b" style="left:19px;top:279px;" width="10" height="28" viewBox="0 0 10 28"><g fill="#8590a2"><circle cx="5" cy="4.600" r="2.900"/><circle cx="5" cy="14" r="2.900"/><circle cx="5" cy="23.400" r="2.900"/></g></svg><svg class="b" style="left:19px;top:343px;" width="10" height="28" viewBox="0 0 10 28"><g fill="#8590a2"><circle cx="5" cy="4.600" r="2.900"/><circle cx="5" cy="14" r="2.900"/><circle cx="5" cy="23.400" r="2.900"/></g></svg><svg class="b" style="left:19px;top:407px;" width="10" height="28" viewBox="0 0 10 28"><g fill="#8590a2"><circle cx="5" cy="4.600" r="2.900"/><circle cx="5" cy="14" r="2.900"/><circle cx="5" cy="23.400" r="2.900"/></g></svg><svg class="b" style="left:19px;top:471px;" width="10" height="28" viewBox="0 0 10 28"><g fill="#8590a2"><circle cx="5" cy="4.600" r="2.900"/><circle cx="5" cy="14" r="2.900"/><circle cx="5" cy="23.400" r="2.900"/></g></svg><svg class="b" style="left:19px;top:535px;" width="10" height="28" viewBox="0 0 10 28"><g fill="#8590a2"><circle cx="5" cy="4.600" r="2.900"/><circle cx="5" cy="14" r="2.900"/><circle cx="5" cy="23.400" r="2.900"/></g></svg><svg class="b" style="left:19px;top:599px;" width="10" height="28" viewBox="0 0 10 28"><g fill="#8590a2"><circle cx="5" cy="4.600" r="2.900"/><circle cx="5" cy="14" r="2.900"/><circle cx="5" cy="23.400" r="2.900"/></g></svg><svg class="b" style="left:19px;top:663px;" width="10" height="28" viewBox="0 0 10 28"><g fill="#8590a2"><circle cx="5" cy="4.600" r="2.900"/><circle cx="5" cy="14" r="2.900"/><circle cx="5" cy="23.400" r="2.900"/></g></svg><svg class="b" style="left:19px;top:727px;" width="10" height="28" viewBox="0 0 10 28"><g fill="#8590a2"><circle cx="5" cy="4.600" r="2.900"/><circle cx="5" cy="14" r="2.900"/><circle cx="5" cy="23.400" r="2.900"/></g></svg><svg class="b" style="left:19px;top:791px;" width="10" height="28" viewBox="0 0 10 28"><g fill="#8590a2"><circle cx="5" cy="4.600" r="2.900"/><circle cx="5" cy="14" r="2.900"/><circle cx="5" cy="23.400" r="2.900"/></g></svg><svg class="b" style="left:19px;top:855px;" width="10" height="28" viewBox="0 0 10 28"><g fill="#8590a2"><circle cx="5" cy="4.600" r="2.900"/><circle cx="5" cy="14" r="2.900"/><circle cx="5" cy="23.400" r="2.900"/></g></svg><svg class="b" style="left:19px;top:919px;" width="10" height="28" viewBox="0 0 10 28"><g fill="#8590a2"><circle cx="5" cy="4.600" r="2.900"/><circle cx="5" cy="14" r="2.900"/><circle cx="5" cy="23.400" r="2.900"/></g></svg><svg class="b" style="left:19px;top:983px;" width="10" height="28" viewBox="0 0 10 28"><g fill="#8590a2"><circle cx="5" cy="4.600" r="2.900"/><circle cx="5" cy="14" r="2.900"/><circle cx="5" cy="23.400" r="2.900"/></g></svg></div>
<div class="b" style="left:1958px;top:292px;width:22px;height:1008px;background:#f7f8f9;"></div>
<div class="b" style="left:1964px;top:501px;width:12px;height:282px;background:#b3b9c4;border-radius:6px;"></div>
<div class="b" style="left:52px;top:1300px;width:1928px;height:22px;background:#f7f8f9;"></div>
<div class="b" style="left:58px;top:1306px;width:1679px;height:12px;background:#b3b9c4;border-radius:6px;"></div>
<div class="b" style="left:52px;top:1322px;width:2794px;height:2px;background:#dddfe5;"></div>
<div class="b" style="left:1980px;top:192px;width:4px;height:1194px;background:#dcdfe6;"></div>
<div class="b" style="left:1979px;top:192px;width:5px;height:50px;background:#cfd3dc;"></div>
<div class="b" style="left:1980px;top:242px;width:4px;height:50px;background:#c2c6d0;"></div>
<svg class="b" style="left:78px;top:1342px;" width="28" height="28" viewBox="0 0 28 28"><path d="M14 3.500V24.500M3.500 14H24.500" stroke="#172b4d" stroke-width="4.200" stroke-linecap="round"/></svg>
<div class="t" style="left:125px;top:1337.5px;height:37px;line-height:37px;font-size:28.5px;color:#172b4d;-webkit-text-stroke:0.5px #172b4d;letter-spacing:-0.31px;">Create</div>
<div class="b" style="left:1984px;top:192px;width:862px;height:98px;background:#f1f2f4;border-top-right-radius:6px;"></div>
<div class="b" style="left:1984px;top:192px;width:862px;height:100px;overflow:hidden;border-top-right-radius:6px;"><div class="b" style="left:-23px;top:50px;width:82px;height:48px;background:#dedfe4;"></div><div class="b" style="left:59px;top:50px;width:82px;height:48px;background:#dedfe4;"></div><div class="b" style="left:551px;top:50px;width:82px;height:48px;background:#dedfe4;"></div><div class="b" style="left:633px;top:50px;width:82px;height:48px;background:#dedfe4;"></div><div class="b" style="left:58px;top:50px;width:2px;height:48px;background:#c8ccd5;"></div><div class="t" style="left:18.0px;top:60.5px;height:28px;line-height:28px;font-size:22px;color:#172b4d;-webkit-text-stroke:0.5px #172b4d;letter-spacing:1.92px;transform:translateX(-50%);transform-origin:center center;">03</div><div class="b" style="left:140px;top:50px;width:2px;height:48px;background:#c8ccd5;"></div><div class="t" style="left:100.0px;top:60.5px;height:28px;line-height:28px;font-size:22px;color:#172b4d;-webkit-text-stroke:0.5px #172b4d;letter-spacing:1.92px;transform:translateX(-50%);transform-origin:center center;">04</div><div class="b" style="left:222px;top:50px;width:2px;height:48px;background:#c8ccd5;"></div><div class="t" style="left:182.0px;top:60.5px;height:28px;line-height:28px;font-size:22px;color:#172b4d;-webkit-text-stroke:0.5px #172b4d;letter-spacing:1.92px;transform:translateX(-50%);transform-origin:center center;">05</div><div class="b" style="left:304px;top:50px;width:2px;height:48px;background:#c8ccd5;"></div><div class="t" style="left:264.0px;top:60.5px;height:28px;line-height:28px;font-size:22px;color:#172b4d;-webkit-text-stroke:0.5px #172b4d;letter-spacing:1.92px;transform:translateX(-50%);transform-origin:center center;">06</div><div class="b" style="left:386px;top:50px;width:2px;height:48px;background:#c8ccd5;"></div><div class="t" style="left:346.0px;top:60.5px;height:28px;line-height:28px;font-size:22px;color:#172b4d;-webkit-text-stroke:0.5px #172b4d;letter-spacing:1.92px;transform:translateX(-50%);transform-origin:center center;">07</div><div class="b" style="left:468px;top:50px;width:2px;height:48px;background:#c8ccd5;"></div><div class="t" style="left:428.0px;top:60.5px;height:28px;line-height:28px;font-size:22px;color:#172b4d;-webkit-text-stroke:0.5px #172b4d;letter-spacing:1.92px;transform:translateX(-50%);transform-origin:center center;">08</div><div class="b" style="left:550px;top:50px;width:2px;height:48px;background:#c8ccd5;"></div><div class="t" style="left:510.0px;top:60.5px;height:28px;line-height:28px;font-size:22px;color:#172b4d;-webkit-text-stroke:0.5px #172b4d;letter-spacing:1.92px;transform:translateX(-50%);transform-origin:center center;">09</div><div class="b" style="left:632px;top:50px;width:2px;height:48px;background:#c8ccd5;"></div><div class="t" style="left:592.0px;top:60.5px;height:28px;line-height:28px;font-size:22px;color:#172b4d;-webkit-text-stroke:0.5px #172b4d;letter-spacing:-0.35px;transform:translateX(-50%) scaleX(0.953);transform-origin:center center;">10</div><div class="b" style="left:714px;top:50px;width:2px;height:48px;background:#c8ccd5;"></div><div class="t" style="left:674.0px;top:60.5px;height:28px;line-height:28px;font-size:22px;color:#172b4d;-webkit-text-stroke:0.5px #172b4d;letter-spacing:0.16px;transform:translateX(-50%);transform-origin:center center;">11</div><div class="b" style="left:796px;top:50px;width:2px;height:48px;background:#c8ccd5;"></div><div class="t" style="left:756.0px;top:60.5px;height:28px;line-height:28px;font-size:22px;color:#172b4d;-webkit-text-stroke:0.5px #172b4d;letter-spacing:-0.35px;transform:translateX(-50%) scaleX(0.953);transform-origin:center center;">12</div><div class="b" style="left:878px;top:50px;width:2px;height:48px;background:#c8ccd5;"></div><div class="t" style="left:838.0px;top:60.5px;height:28px;line-height:28px;font-size:22px;color:#172b4d;-webkit-text-stroke:0.5px #172b4d;letter-spacing:-0.35px;transform:translateX(-50%) scaleX(0.953);transform-origin:center center;">13</div><div class="b" style="left:0px;top:48px;width:862px;height:2px;background:#c8ccd5;"></div><div class="b" style="left:0px;top:98px;width:862px;height:2px;background:#c8ccd5;"></div><div class="t" style="left:12.5px;top:8.5px;height:28px;line-height:28px;font-size:22px;color:#172b4d;-webkit-text-stroke:0.5px #172b4d;letter-spacing:0.78px;">February 2024</div></div>
<svg class="b" style="left:1984px;top:292px;" width="840" height="1008" viewBox="0 0 840 1008"><rect x="58" y="0" width="2" height="1008" fill="#e3e4ea"/><rect x="632" y="0" width="2" height="1008" fill="#e3e4ea"/><circle cx="804" cy="102" r="24" fill="#f8f8f9"/><path d="M802 96l6 6-6 6" fill="none" stroke="#8590a2" stroke-width="3.800" stroke-linecap="round" stroke-linejoin="round"/><circle cx="804" cy="166" r="24" fill="#f8f8f9"/><path d="M802 160l6 6-6 6" fill="none" stroke="#8590a2" stroke-width="3.800" stroke-linecap="round" stroke-linejoin="round"/><circle cx="804" cy="742" r="24" fill="#f8f8f9"/><path d="M802 736l6 6-6 6" fill="none" stroke="#8590a2" stroke-width="3.800" stroke-linecap="round" stroke-linejoin="round"/><circle cx="804" cy="934" r="24" fill="#f8f8f9"/><path d="M802 928l6 6-6 6" fill="none" stroke="#8590a2" stroke-width="3.800" stroke-linecap="round" stroke-linejoin="round"/><path d="M442 0 L442 998 L460 998" fill="none" stroke="#768096" stroke-width="4"/><path d="M471 998l-11 -8v16z" fill="#768096"/><path d="M306 230 L334 230 L334 38 L788 38" fill="none" stroke="#768096" stroke-width="4"/><path d="M799 38l-11 -8v16z" fill="#768096"/><path d="M798 678 L826 678 L826 102 L846 102" fill="none" stroke="#768096" stroke-width="4"/><path d="M552 358 L580 358 L580 390 L524 390 L524 422 L542 422" fill="none" stroke="#768096" stroke-width="4"/><path d="M553 422l-11 -8v16z" fill="#768096"/><path d="M442 486 L460 486" fill="none" stroke="#768096" stroke-width="4"/><path d="M471 486l-11 -8v16z" fill="#768096"/><path d="M541 998 L570 998 L570 966 L442 966" fill="none" stroke="#768096" stroke-width="4"/><rect x="224" y="206" width="82" height="48" rx="7" fill="rgba(145,190,95,.2)"/><rect x="716" y="270" width="200" height="48" rx="7" fill="rgba(50,95,215,.2)"/><rect x="-84" y="334" width="636" height="48" rx="7" fill="rgba(100,185,235,.2)"/><rect x="552" y="398" width="364" height="48" rx="7" fill="rgba(195,115,200,.2)"/><rect x="470" y="462" width="328" height="48" rx="7" fill="rgba(245,180,165,.2)"/><rect x="634" y="526" width="282" height="48" rx="7" fill="rgba(50,95,215,.2)"/><rect x="142" y="654" width="656" height="48" rx="7" fill="rgba(245,210,115,.2)"/><rect x="306" y="782" width="246" height="48" rx="7" fill="rgba(50,95,215,.2)"/><rect x="388" y="846" width="528" height="48" rx="7" fill="rgba(50,95,215,.2)"/><path d="M820 38L846 12L872 38L846 64Z" fill="#e9f2df" stroke="#e9f2df" stroke-width="6" stroke-linejoin="round"/><path d="M491.5 998L514.5 975L537.5 998L514.5 1021Z" fill="#fde2e0" stroke="#fde2e0" stroke-width="6" stroke-linejoin="round"/></svg>
<div class="b" style="left:1980px;top:626px;width:4px;height:48px;background:rgba(100,185,235,.2);"></div>
<div class="b" style="left:2824px;top:292px;width:22px;height:1008px;background:#f7f8f9;"></div>
<div class="b" style="left:2830px;top:501px;width:12px;height:282px;background:#b3b9c4;border-radius:6px;"></div>
<div class="b" style="left:1984px;top:1300px;width:862px;height:22px;background:#f7f8f9;"></div>
<div class="b" style="left:2343px;top:1306px;width:16px;height:12px;background:#b3b9c4;border-radius:6px;"></div>
<svg class="b" style="left:2142px;top:1343.5px;" width="20" height="24" viewBox="0 0 20 24"><path d="M7 6l6 6-6 6" fill="none" stroke="#172b4d" stroke-width="3.800" stroke-linecap="round" stroke-linejoin="round"/></svg>
<div class="b" style="left:2191px;top:1324px;width:2px;height:62px;background:#dddfe5;"></div>
<div class="t" style="left:2226px;top:1338.0px;height:35px;line-height:35px;font-size:27px;color:#172b4d;-webkit-text-stroke:0.9px #172b4d;letter-spacing:1.48px;">Today</div>
<div class="b" style="left:2336px;top:1324px;width:2px;height:62px;background:#dddfe5;"></div>
<div class="b" style="left:2346px;top:1324px;width:97px;height:62px;background:#ebf1fd;border-radius:6px;"></div>
<div class="t" style="left:2363px;top:1338.0px;height:35px;line-height:35px;font-size:27px;color:#1d55c8;font-weight:700;letter-spacing:-0.18px;">Days</div>
<div class="t" style="left:2468px;top:1338.0px;height:35px;line-height:35px;font-size:27px;color:#172b4d;-webkit-text-stroke:0.5px #172b4d;letter-spacing:-0.35px;transform:scaleX(0.992);transform-origin:left center;">Weeks</div>
<div class="t" style="left:2590px;top:1338.0px;height:35px;line-height:35px;font-size:27px;color:#172b4d;-webkit-text-stroke:0.5px #172b4d;letter-spacing:0.61px;">Months</div>
<div class="t" style="left:2723px;top:1338.0px;height:35px;line-height:35px;font-size:27px;color:#172b4d;-webkit-text-stroke:0.5px #172b4d;letter-spacing:0.28px;">Quarters</div>
</body></html>
